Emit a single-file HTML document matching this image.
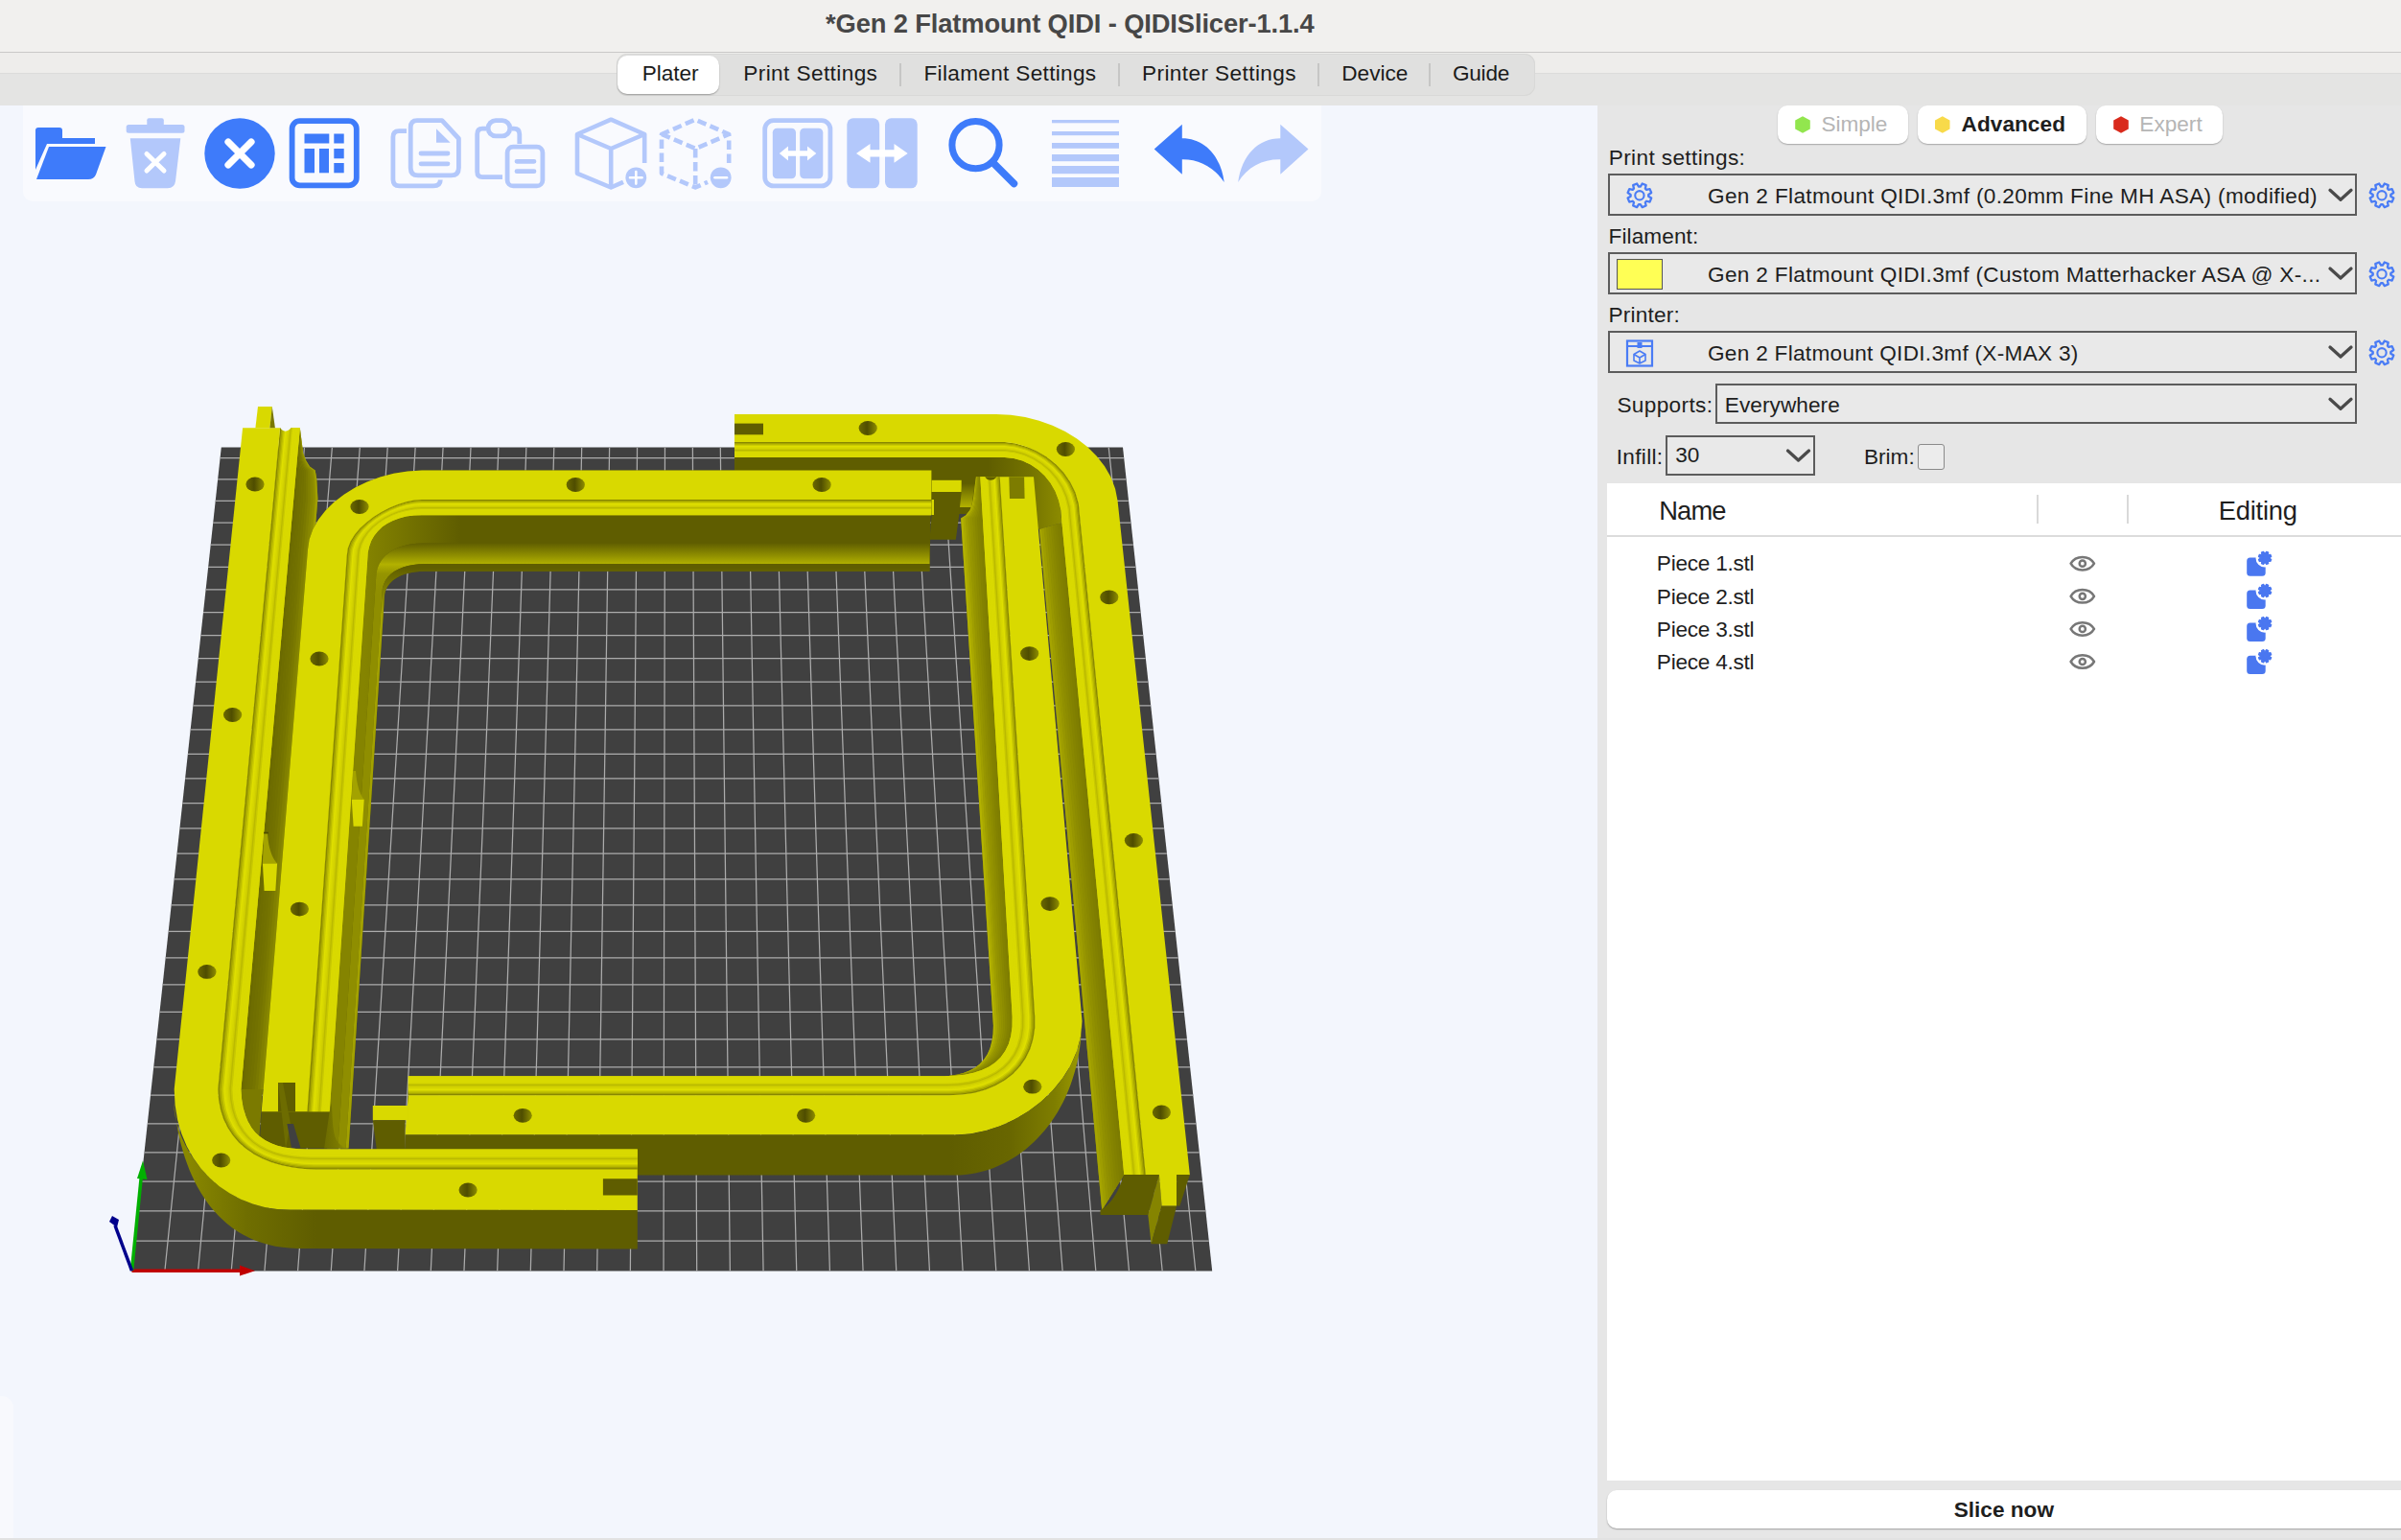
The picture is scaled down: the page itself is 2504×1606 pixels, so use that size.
<!DOCTYPE html>
<html><head><meta charset="utf-8"><style>*{margin:0;padding:0}
html,body{width:2504px;height:1606px;overflow:hidden;background:#e6e6e6}
.t{position:absolute;white-space:pre;line-height:1;font-family:"Liberation Sans", sans-serif}
.b{position:absolute}
svg{position:absolute;left:0;top:0}</style></head><body>
<div class="b" style="left:0px;top:0px;width:2504px;height:54px;background:#f1f0ee"></div>
<div class="b" style="left:0px;top:54px;width:2504px;height:1.6px;background:#c9c8c7"></div>
<div class="b" style="left:0px;top:55px;width:2504px;height:21px;background:#eeedeb"></div>
<div class="b" style="left:0px;top:76px;width:2504px;height:34px;background:#e4e4e3"></div>
<div class="b" style="left:0px;top:75.5px;width:2504px;height:1.5px;background:#dcdcdb"></div>
<div class="t" style="left:861.0px;top:10.8px;font-size:27.3px;font-weight:700;color:#474747;letter-spacing:-0.115px;">*Gen 2 Flatmount QIDI - QIDISlicer-1.1.4</div>
<div class="b" style="left:643px;top:56px;width:958px;height:43.5px;background:#e0e0df;border-radius:11px;box-shadow:inset 0 0 0 1px #d8d8d7"></div>
<div class="b" style="left:644px;top:58px;width:106px;height:40.3px;background:#fff;border-radius:10px;box-shadow:0 1px 1.5px rgba(0,0,0,0.3)"></div>
<div class="b" style="left:938px;top:66px;width:2px;height:24px;background:#c6c6c5"></div>
<div class="b" style="left:1166px;top:66px;width:2px;height:24px;background:#c6c6c5"></div>
<div class="b" style="left:1374px;top:66px;width:2px;height:24px;background:#c6c6c5"></div>
<div class="b" style="left:1490px;top:66px;width:2px;height:24px;background:#c6c6c5"></div>
<div class="t" style="left:669.8px;top:65.6px;font-size:22.6px;font-weight:400;color:#1b1b1b;letter-spacing:-0.047px;">Plater</div>
<div class="t" style="left:775.3px;top:65.6px;font-size:22.6px;font-weight:400;color:#1b1b1b;letter-spacing:0.402px;">Print Settings</div>
<div class="t" style="left:963.5px;top:65.6px;font-size:22.6px;font-weight:400;color:#1b1b1b;letter-spacing:0.32px;">Filament Settings</div>
<div class="t" style="left:1191.0px;top:65.6px;font-size:22.6px;font-weight:400;color:#1b1b1b;letter-spacing:0.408px;">Printer Settings</div>
<div class="t" style="left:1399.3px;top:65.6px;font-size:22.6px;font-weight:400;color:#1b1b1b;letter-spacing:-0.01px;">Device</div>
<div class="t" style="left:1515.0px;top:65.6px;font-size:22.6px;font-weight:400;color:#1b1b1b;letter-spacing:-0.259px;">Guide</div>
<div class="b" style="left:0px;top:110px;width:1666px;height:1494px;background:#f3f6fd"></div>
<div class="b" style="left:0px;top:1456px;width:14px;height:148px;background:#f8f9fd;border-top-right-radius:12px"></div>
<div class="b" style="left:24px;top:110px;width:1354px;height:100px;background:#f9fafe;border-bottom-left-radius:10px;border-bottom-right-radius:10px"></div>
<div class="b" style="left:1666px;top:110px;width:838px;height:1496px;background:#e6e6e6"></div>
<div class="b" style="left:0px;top:1604px;width:2504px;height:2px;background:#e2e2e2"></div>
<div class="b" style="left:1854px;top:110px;width:136px;height:40px;background:#fff;border-radius:10px;box-shadow:0 1px 1.5px rgba(0,0,0,0.28)"></div>
<div class="b" style="left:2000px;top:110px;width:176px;height:40px;background:#fff;border-radius:10px;box-shadow:0 1px 1.5px rgba(0,0,0,0.28)"></div>
<div class="b" style="left:2186px;top:110px;width:132px;height:40px;background:#fff;border-radius:10px;box-shadow:0 1px 1.5px rgba(0,0,0,0.28)"></div>
<div class="t" style="left:1899.6px;top:119.2px;font-size:22.6px;font-weight:400;color:#b5b5b5;letter-spacing:-0.06px;">Simple</div>
<div class="t" style="left:2045.5px;top:119.2px;font-size:22.6px;font-weight:700;color:#1e1e1e;letter-spacing:0.064px;">Advanced</div>
<div class="t" style="left:2231.3px;top:119.2px;font-size:22.6px;font-weight:400;color:#b5b5b5;letter-spacing:0.015px;">Expert</div>
<div class="t" style="left:1677.7px;top:153.6px;font-size:22.6px;font-weight:400;color:#1e1e1e;letter-spacing:0.381px;">Print settings:</div>
<div class="t" style="left:1677.5px;top:235.9px;font-size:22.6px;font-weight:400;color:#1e1e1e;letter-spacing:0.098px;">Filament:</div>
<div class="t" style="left:1677.5px;top:317.5px;font-size:22.6px;font-weight:400;color:#1e1e1e;letter-spacing:0.209px;">Printer:</div>
<div class="t" style="left:1686.4px;top:412.0px;font-size:22.6px;font-weight:400;color:#1e1e1e;letter-spacing:0.365px;">Supports:</div>
<div class="t" style="left:1685.7px;top:465.5px;font-size:22.6px;font-weight:400;color:#1e1e1e;letter-spacing:0.333px;">Infill:</div>
<div class="t" style="left:1944.0px;top:465.5px;font-size:22.6px;font-weight:400;color:#1e1e1e;letter-spacing:-0.004px;">Brim:</div>
<div class="b" style="left:1677px;top:181px;width:781px;height:43.7px;box-sizing:border-box;border:2px solid #5c5c5c;background:#e9e9e9"></div>
<div class="b" style="left:1677px;top:263px;width:781px;height:43.7px;box-sizing:border-box;border:2px solid #5c5c5c;background:#e9e9e9"></div>
<div class="b" style="left:1677px;top:345px;width:781px;height:43.7px;box-sizing:border-box;border:2px solid #5c5c5c;background:#e9e9e9"></div>
<div class="b" style="left:1789px;top:400px;width:669px;height:42.3px;box-sizing:border-box;border:2px solid #5c5c5c;background:#e9e9e9"></div>
<div class="b" style="left:1737px;top:453.5px;width:156px;height:42.5px;box-sizing:border-box;border:2px solid #5c5c5c;background:#e9e9e9"></div>
<div class="b" style="left:2000px;top:463px;width:28px;height:27px;box-sizing:border-box;border:1.5px solid #8a8a8a;background:#ececec;border-radius:3px"></div>
<div class="b" style="left:1686px;top:270px;width:48px;height:32px;box-sizing:border-box;border:1.5px solid #555;background:#ffff55"></div>
<div class="t" style="left:1781.0px;top:193.5px;font-size:22.6px;font-weight:400;color:#1e1e1e;letter-spacing:0.348px;">Gen 2 Flatmount QIDI.3mf (0.20mm Fine MH ASA) (modified)</div>
<div class="t" style="left:1781.0px;top:275.7px;font-size:22.6px;font-weight:400;color:#1e1e1e;letter-spacing:0.329px;">Gen 2 Flatmount QIDI.3mf (Custom Matterhacker ASA @ X-...</div>
<div class="t" style="left:1781.0px;top:357.9px;font-size:22.6px;font-weight:400;color:#1e1e1e;letter-spacing:0.292px;">Gen 2 Flatmount QIDI.3mf (X-MAX 3)</div>
<div class="t" style="left:1798.8px;top:412.0px;font-size:22.6px;font-weight:400;color:#1e1e1e;letter-spacing:0.07px;">Everywhere</div>
<div class="t" style="left:1747.2px;top:463.7px;font-size:22.6px;font-weight:400;color:#1e1e1e;letter-spacing:0.08px;">30</div>
<div class="b" style="left:1676px;top:504px;width:828px;height:1039.5px;background:#fff"></div>
<div class="b" style="left:1676px;top:557.5px;width:828px;height:2px;background:#dcdcdc"></div>
<div class="b" style="left:2124px;top:516px;width:2px;height:30px;background:#d9d9d9"></div>
<div class="b" style="left:2218px;top:516px;width:2px;height:30px;background:#d9d9d9"></div>
<div class="t" style="left:1730.3px;top:518.7px;font-size:27.3px;font-weight:400;color:#1e1e1e;letter-spacing:-0.907px;">Name</div>
<div class="t" style="left:2313.8px;top:518.7px;font-size:27.3px;font-weight:400;color:#1e1e1e;letter-spacing:-0.21px;">Editing</div>
<div class="t" style="left:1727.8px;top:577.4px;font-size:22.6px;font-weight:400;color:#1e1e1e;letter-spacing:-0.239px;">Piece 1.stl</div>
<div class="t" style="left:1727.8px;top:611.5px;font-size:22.6px;font-weight:400;color:#1e1e1e;letter-spacing:-0.239px;">Piece 2.stl</div>
<div class="t" style="left:1727.8px;top:645.6px;font-size:22.6px;font-weight:400;color:#1e1e1e;letter-spacing:-0.239px;">Piece 3.stl</div>
<div class="t" style="left:1727.8px;top:679.7px;font-size:22.6px;font-weight:400;color:#1e1e1e;letter-spacing:-0.239px;">Piece 4.stl</div>
<div class="b" style="left:1676px;top:1554px;width:840px;height:40px;background:#fff;border-radius:10px;box-shadow:0 1px 1.5px rgba(0,0,0,0.3)"></div>
<div class="t" style="left:2037.7px;top:1563.5px;font-size:22.6px;font-weight:700;color:#1e1e1e;letter-spacing:0.009px;">Slice now</div>

<svg width="2504" height="1606" viewBox="0 0 2504 1606"><defs><linearGradient id="hole" x1="0" x2="1" y1="0" y2="0"><stop offset="0" stop-color="#6b6900"/><stop offset="0.45" stop-color="#4f4d00"/><stop offset="0.55" stop-color="#5a5800"/><stop offset="1" stop-color="#8e8d00"/></linearGradient><linearGradient id="wallR" x1="0" x2="1" y1="0" y2="0"><stop offset="0" stop-color="#6c6b00"/><stop offset="0.55" stop-color="#7a7900"/><stop offset="0.9" stop-color="#959400"/><stop offset="1" stop-color="#b0af00"/></linearGradient><linearGradient id="wallL" x1="0" x2="1" y1="0" y2="0"><stop offset="0" stop-color="#b5b400"/><stop offset="0.35" stop-color="#9a9900"/><stop offset="1" stop-color="#7a7900"/></linearGradient><linearGradient id="p2wall" gradientUnits="userSpaceOnUse" x1="380" y1="0" x2="480" y2="0"><stop offset="0" stop-color="#858400"/><stop offset="1" stop-color="#5f5d00"/></linearGradient><linearGradient id="p2fil" gradientUnits="userSpaceOnUse" x1="0" y1="566" x2="0" y2="620"><stop offset="0" stop-color="#5f5d00"/><stop offset="0.2" stop-color="#868500"/><stop offset="0.42" stop-color="#b2b100"/><stop offset="0.6" stop-color="#959400"/><stop offset="1" stop-color="#8f8e00"/></linearGradient><linearGradient id="p2bot" gradientUnits="userSpaceOnUse" x1="0" y1="592" x2="0" y2="640"><stop offset="0" stop-color="#5f5d00"/><stop offset="1" stop-color="#a3a200"/></linearGradient><linearGradient id="p2endg" gradientUnits="userSpaceOnUse" x1="0" y1="504" x2="0" y2="529"><stop offset="0" stop-color="#5f5d00"/><stop offset="0.35" stop-color="#7d7c00"/><stop offset="1" stop-color="#b3b200"/></linearGradient><linearGradient id="p3wall" gradientUnits="userSpaceOnUse" x1="1030" y1="0" x2="1108" y2="0"><stop offset="0" stop-color="#5f5d00"/><stop offset="0.55" stop-color="#737200"/><stop offset="1" stop-color="#8d8c00"/></linearGradient><linearGradient id="p1front" gradientUnits="userSpaceOnUse" x1="185" y1="0" x2="330" y2="0"><stop offset="0" stop-color="#8d8c00"/><stop offset="0.5" stop-color="#6f6e00"/><stop offset="1" stop-color="#5f5d00"/></linearGradient><linearGradient id="p4front" gradientUnits="userSpaceOnUse" x1="990" y1="0" x2="1128" y2="0"><stop offset="0" stop-color="#5f5d00"/><stop offset="0.45" stop-color="#686600"/><stop offset="0.8" stop-color="#7f7e00"/><stop offset="1" stop-color="#9d9c00"/></linearGradient></defs><polygon points="230.8,466.6 1171.0,466.6 1264.2,1325.5 137.0,1325.5" fill="#404040" /><path d="M171.88,1325.50L259.61,466.66M206.55,1325.50L288.53,466.66M241.23,1325.50L317.46,466.66M275.91,1325.50L346.38,466.66M310.58,1325.50L375.30,466.66M345.26,1325.50L404.23,466.66M379.94,1325.50L433.15,466.66M414.61,1325.50L462.08,466.66M449.29,1325.50L491.00,466.66M483.97,1325.50L519.92,466.66M518.65,1325.50L548.85,466.66M553.32,1325.50L577.77,466.66M588.00,1325.50L606.70,466.66M622.68,1325.50L635.62,466.66M657.35,1325.50L664.54,466.66M692.03,1325.50L693.47,466.66M726.71,1325.50L722.39,466.66M761.38,1325.50L751.32,466.66M796.06,1325.50L780.24,466.66M830.74,1325.50L809.17,466.66M865.42,1325.50L838.09,466.66M900.09,1325.50L867.01,466.66M934.77,1325.50L895.94,466.66M969.45,1325.50L924.86,466.66M1004.12,1325.50L953.79,466.66M1038.80,1325.50L982.71,466.66M1073.48,1325.50L1011.63,466.66M1108.15,1325.50L1040.56,466.66M1142.83,1325.50L1069.48,466.66M1177.51,1325.50L1098.41,466.66M1212.19,1325.50L1127.33,466.66M1246.86,1325.50L1156.25,466.66M140.63,1294.01L1260.77,1294.01M144.01,1262.90L1257.39,1262.90M147.36,1232.17L1254.04,1232.17M150.66,1201.80L1250.74,1201.80M153.93,1171.79L1247.47,1171.79M157.16,1142.14L1244.24,1142.14M160.35,1112.84L1241.05,1112.84M163.50,1083.87L1237.90,1083.87M166.62,1055.25L1234.78,1055.25M169.70,1026.95L1231.70,1026.95M172.74,998.98L1228.66,998.98M175.75,971.33L1225.65,971.33M178.73,943.99L1222.67,943.99M181.67,916.96L1219.73,916.96M184.58,890.23L1216.82,890.23M187.46,863.80L1213.94,863.80M190.30,837.66L1211.10,837.66M193.11,811.81L1208.29,811.81M195.90,786.25L1205.50,786.25M198.65,760.96L1202.75,760.96M201.37,735.95L1200.03,735.95M204.07,711.20L1197.33,711.20M206.73,686.73L1194.67,686.73M209.37,662.51L1192.03,662.51M211.97,638.55L1189.43,638.55M214.55,614.85L1186.85,614.85M217.11,591.39L1184.29,591.39M219.63,568.18L1181.77,568.18M222.13,545.21L1179.27,545.21M224.61,522.47L1176.79,522.47M227.06,499.97L1174.34,499.97M229.48,477.71L1171.92,477.71" stroke="#acacac" stroke-width="1.25" fill="none"/><path d="M766,476 L1047.7,476 C1076.9,480 1094.4,495 1105,520.1 L1107.4,545 L1083.9,552 C1060,540 1030,536 1008,535.9 L766,535.9 Z" fill="url(#p3wall)" /><polygon points="1083.9,552.0 1149.2,1262.0 1172.3,1225.2 1107.4,545.0" fill="#838200" /><polygon points="1083.9,552.0 1149.2,1262.0 1152.0,1257.6 1086.7,551.2" fill="#a5a400" /><polygon points="1086.3,551.3 1151.5,1258.3 1154.3,1253.9 1089.1,550.5" fill="#9e9d00" /><polygon points="1088.6,550.6 1153.9,1254.6 1156.6,1250.2 1091.5,549.8" fill="#979600" /><polygon points="1091.0,549.9 1156.2,1251.0 1158.9,1246.5 1093.8,549.1" fill="#919000" /><polygon points="1093.3,549.2 1158.5,1247.3 1161.2,1242.9 1096.2,548.4" fill="#8d8c00" /><polygon points="1095.7,548.5 1160.8,1243.6 1163.5,1239.2 1098.5,547.7" fill="#898800" /><polygon points="1098.0,547.8 1163.1,1239.9 1165.8,1235.5 1100.9,547.0" fill="#858400" /><polygon points="1100.4,547.1 1165.4,1236.2 1168.1,1231.8 1103.2,546.3" fill="#828100" /><polygon points="1102.7,546.4 1167.7,1232.6 1170.4,1228.1 1105.6,545.6" fill="#7f7e00" /><polygon points="1105.1,545.7 1170.0,1228.9 1172.3,1225.2 1107.4,545.0" fill="#7c7b00" /><polygon points="766.0,461.1 1047.7,461.1 1059.0,462.6 1070.2,465.7 1081.1,470.4 1091.4,476.6 1100.8,484.1 1109.2,492.8 1116.1,502.7 1121.4,513.5 1124.8,525.2 1126.0,537.7 1194.8,1225.2 1172.3,1225.2 1107.3,543.5 1106.5,532.3 1104.2,521.9 1100.5,512.3 1095.6,503.7 1089.6,496.2 1082.6,489.7 1074.8,484.5 1066.3,480.6 1057.2,478.0 1047.7,476.9 766.0,476.9" fill="#d2d100" /><polygon points="766.0,461.1 1047.7,461.1 1059.0,462.6 1070.2,465.7 1081.1,470.4 1091.4,476.6 1100.8,484.1 1109.2,492.8 1116.1,502.7 1121.4,513.5 1124.8,525.2 1126.0,537.7 1194.8,1225.2 1192.9,1225.2 1124.5,538.2 1123.3,525.8 1120.0,514.2 1114.8,503.5 1108.1,493.7 1099.9,485.1 1090.7,477.7 1080.5,471.6 1069.8,466.9 1058.8,463.8 1047.7,462.4 766.0,462.4" fill="#888700" /><polygon points="766.0,462.1 1047.7,462.1 1058.8,463.5 1069.9,466.6 1080.7,471.3 1090.8,477.4 1100.1,484.9 1108.3,493.5 1115.2,503.3 1120.4,514.0 1123.7,525.7 1124.8,538.1 1193.3,1225.2 1191.5,1225.2 1123.3,538.5 1122.2,526.3 1118.9,514.7 1113.9,504.1 1107.2,494.4 1099.2,485.9 1090.1,478.5 1080.2,472.5 1069.6,467.9 1058.7,464.8 1047.7,463.4 766.0,463.4" fill="#a4a300" /><polygon points="766.0,463.1 1047.7,463.1 1058.7,464.5 1069.7,467.6 1080.3,472.2 1090.3,478.2 1099.4,485.6 1107.5,494.2 1114.2,503.9 1119.3,514.6 1122.5,526.1 1123.7,538.4 1191.9,1225.2 1190.1,1225.2 1122.1,538.9 1121.0,526.7 1117.9,515.3 1112.9,504.7 1106.4,495.1 1098.5,486.6 1089.6,479.3 1079.8,473.3 1069.4,468.8 1058.6,465.8 1047.7,464.4 766.0,464.4" fill="#b8b800" /><polygon points="766.0,464.1 1047.7,464.1 1058.6,465.4 1069.4,468.5 1079.9,473.1 1089.7,479.1 1098.7,486.4 1106.6,494.9 1113.2,504.5 1118.2,515.1 1121.4,526.6 1122.5,538.8 1190.5,1225.2 1188.7,1225.2 1121.0,539.3 1119.9,527.1 1116.8,515.8 1111.9,505.3 1105.5,495.8 1097.8,487.4 1089.0,480.1 1079.4,474.2 1069.1,469.7 1058.5,466.7 1047.7,465.4 766.0,465.4" fill="#cccc00" /><polygon points="766.0,465.1 1047.7,465.1 1058.5,466.4 1069.2,469.4 1079.5,473.9 1089.2,479.9 1098.0,487.1 1105.8,495.6 1112.2,505.1 1117.1,515.6 1120.2,527.0 1121.3,539.2 1189.1,1225.2 1187.3,1225.2 1119.8,539.6 1118.7,527.6 1115.7,516.3 1110.9,505.9 1104.7,496.5 1097.1,488.1 1088.5,481.0 1079.0,475.1 1068.9,470.6 1058.4,467.7 1047.7,466.4 766.0,466.4" fill="#dfdf00" /><polygon points="766.0,466.0 1047.7,466.0 1058.4,467.4 1069.0,470.3 1079.1,474.8 1088.6,480.7 1097.3,487.9 1104.9,496.2 1111.3,505.7 1116.1,516.1 1119.1,527.4 1120.2,539.5 1187.7,1225.2 1185.9,1225.2 1118.6,540.0 1117.6,528.0 1114.6,516.8 1110.0,506.5 1103.8,497.1 1096.4,488.9 1087.9,481.8 1078.6,476.0 1068.6,471.6 1058.3,468.7 1047.7,467.3 766.0,467.3" fill="#dada00" /><polygon points="766.0,467.0 1047.7,467.0 1058.3,468.3 1068.7,471.3 1078.7,475.7 1088.1,481.5 1096.6,488.6 1104.1,496.9 1110.3,506.3 1115.0,516.7 1117.9,527.9 1119.0,539.9 1186.3,1225.2 1184.5,1225.2 1117.4,540.4 1116.4,528.5 1113.6,517.4 1109.0,507.1 1103.0,497.8 1095.7,489.6 1087.4,482.6 1078.2,476.9 1068.4,472.5 1058.2,469.6 1047.7,468.3 766.0,468.3" fill="#d5d500" /><polygon points="766.0,468.0 1047.7,468.0 1058.2,469.3 1068.5,472.2 1078.3,476.6 1087.6,482.3 1095.9,489.4 1103.2,497.6 1109.3,506.9 1113.9,517.2 1116.8,528.3 1117.8,540.2 1184.9,1225.2 1183.1,1225.2 1116.3,540.7 1115.3,528.9 1112.5,517.9 1108.0,507.7 1102.1,498.5 1095.0,490.4 1086.8,483.4 1077.8,477.7 1068.2,473.4 1058.1,470.6 1047.7,469.3 766.0,469.3" fill="#cdcc00" /><polygon points="766.0,469.0 1047.7,469.0 1058.1,470.3 1068.2,473.1 1077.9,477.5 1087.0,483.2 1095.2,490.1 1102.4,498.3 1108.3,507.5 1112.8,517.7 1115.7,528.8 1116.7,540.6 1183.5,1225.2 1181.7,1225.2 1115.1,541.1 1114.1,529.4 1111.4,518.4 1107.0,508.3 1101.3,499.2 1094.3,491.1 1086.3,484.2 1077.4,478.6 1067.9,474.4 1057.9,471.5 1047.7,470.3 766.0,470.3" fill="#bbba00" /><polygon points="766.0,470.0 1047.7,470.0 1058.0,471.2 1068.0,474.1 1077.5,478.3 1086.5,484.0 1094.5,490.9 1101.6,499.0 1107.4,508.1 1111.7,518.2 1114.5,529.2 1115.5,541.0 1182.1,1225.2 1180.2,1225.2 1113.9,541.4 1113.0,529.8 1110.3,518.9 1106.1,508.9 1100.4,499.9 1093.6,491.9 1085.7,485.1 1077.0,479.5 1067.7,475.3 1057.8,472.5 1047.7,471.3 766.0,471.3" fill="#c8c800" /><polygon points="766.0,471.0 1047.7,471.0 1057.9,472.2 1067.8,475.0 1077.2,479.2 1085.9,484.8 1093.8,491.6 1100.7,499.7 1106.4,508.7 1110.7,518.8 1113.4,529.7 1114.3,541.3 1180.7,1225.2 1178.8,1225.2 1112.8,541.8 1111.9,530.2 1109.2,519.4 1105.1,509.5 1099.6,500.6 1092.9,492.6 1085.2,485.9 1076.6,480.4 1067.4,476.2 1057.7,473.5 1047.7,472.3 766.0,472.3" fill="#d9d900" /><polygon points="766.0,472.0 1047.7,472.0 1057.8,473.2 1067.5,475.9 1076.8,480.1 1085.4,485.6 1093.1,492.4 1099.9,500.3 1105.4,509.3 1109.6,519.3 1112.2,530.1 1113.1,541.7 1179.3,1225.2 1177.4,1225.2 1111.6,542.2 1110.7,530.7 1108.2,520.0 1104.1,510.1 1098.7,501.2 1092.2,493.4 1084.6,486.7 1076.3,481.3 1067.2,477.1 1057.6,474.4 1047.7,473.3 766.0,473.3" fill="#d9d900" /><polygon points="766.0,472.9 1047.7,472.9 1057.7,474.1 1067.3,476.8 1076.4,481.0 1084.8,486.4 1092.4,493.2 1099.0,501.0 1104.4,509.9 1108.5,519.8 1111.1,530.5 1112.0,542.0 1177.9,1225.2 1176.0,1225.2 1110.4,542.5 1109.6,531.1 1107.1,520.5 1103.1,510.7 1097.9,501.9 1091.5,494.2 1084.1,487.5 1075.9,482.1 1066.9,478.1 1057.5,475.4 1047.7,474.3 766.0,474.3" fill="#d9d900" /><polygon points="766.0,473.9 1047.7,473.9 1057.5,475.1 1067.0,477.8 1076.0,481.9 1084.3,487.3 1091.7,493.9 1098.2,501.7 1103.5,510.5 1107.4,520.3 1109.9,531.0 1110.8,542.4 1176.5,1225.2 1174.6,1225.2 1109.3,542.9 1108.4,531.6 1106.0,521.0 1102.2,511.3 1097.0,502.6 1090.8,494.9 1083.6,488.4 1075.5,483.0 1066.7,479.0 1057.4,476.4 1047.7,475.2 766.0,475.2" fill="#d9d900" /><polygon points="766.0,474.9 1047.7,474.9 1057.4,476.1 1066.8,478.7 1075.6,482.7 1083.7,488.1 1091.0,494.7 1097.3,502.4 1102.5,511.1 1106.4,520.8 1108.8,531.4 1109.6,542.8 1175.1,1225.2 1173.2,1225.2 1108.1,543.3 1107.3,532.0 1104.9,521.5 1101.2,511.9 1096.2,503.3 1090.1,495.7 1083.0,489.2 1075.1,483.9 1066.5,479.9 1057.3,477.3 1047.7,476.2 766.0,476.2" fill="#d9d900" /><polygon points="766.0,475.9 1047.7,475.9 1057.3,477.0 1066.5,479.6 1075.2,483.6 1083.2,488.9 1090.3,495.4 1096.5,503.1 1101.5,511.7 1105.3,521.4 1107.6,531.9 1108.5,543.1 1173.7,1225.2 1172.3,1225.2 1107.3,543.5 1106.5,532.3 1104.2,521.9 1100.5,512.3 1095.6,503.7 1089.6,496.2 1082.6,489.7 1074.8,484.5 1066.3,480.6 1057.2,478.0 1047.7,476.9 766.0,476.9" fill="#d9d900" /><polygon points="766.0,431.9 1039.0,431.9 1054.2,432.7 1069.2,435.0 1083.7,438.7 1097.7,443.8 1110.9,450.1 1123.1,457.6 1134.1,466.1 1143.8,475.7 1152.0,486.2 1158.5,497.6 1163.1,509.7 1165.6,522.5 1240.9,1225.2 1194.8,1225.2 1126.0,537.7 1124.8,525.2 1121.4,513.5 1116.1,502.7 1109.2,492.8 1100.8,484.1 1091.4,476.6 1081.1,470.4 1070.2,465.7 1059.0,462.6 1047.7,461.1 766.0,461.1" fill="#d9d900" /><polygon points="766.0,441.6 796.0,441.6 796.0,453.3 766.0,453.3" fill="#5f5d00" /><path d="M1166.2,1225 L1172.2,1225 C1166,1245 1158,1256 1147.6,1262 L1147.6,1267 L1197.3,1267 L1208.9,1225 Z" fill="#5f5d00" /><polygon points="1208.9,1225.0 1211.6,1257.5 1200.6,1297.3 1197.3,1267.0" fill="#858400" /><polygon points="1211.6,1257.5 1227.1,1257.5 1217.2,1297.3 1200.6,1297.3" fill="#5f5d00" /><polygon points="1208.9,1225.0 1227.1,1225.0 1227.1,1257.5 1211.6,1257.5" fill="#d9d900" /><polygon points="1227.1,1225.0 1240.9,1225.0 1230.4,1257.5 1227.1,1257.5" fill="#5f5d00" /><ellipse cx="905.2" cy="446.5" rx="9.6" ry="7.4" fill="url(#hole)"/><ellipse cx="1111.4" cy="468.5" rx="9.6" ry="7.4" fill="url(#hole)"/><ellipse cx="1156.8" cy="622.8" rx="9.6" ry="7.4" fill="url(#hole)"/><ellipse cx="1182.4" cy="876.4" rx="9.6" ry="7.4" fill="url(#hole)"/><ellipse cx="1211.4" cy="1160.0" rx="9.6" ry="7.4" fill="url(#hole)"/><polygon points="312.8,446.2 310.4,472.7 309.8,480.0 309.2,486.5 308.9,490.4 308.1,498.7 306.2,520.0 251.4,1136.0 280.6,1136.0 331.4,520.0 330.2,498.7 328.7,490.4 323.0,486.5 319.0,480.0 316.2,472.7 312.8,446.2" fill="#8f8e00" /><polygon points="312.8,446.2 310.4,472.7 309.8,480.0 309.2,486.5 308.9,490.4 308.1,498.7 306.2,520.0 251.4,1136.0 254.9,1136.0 309.3,520.0 310.8,498.7 311.2,490.4 310.9,486.5 310.9,480.0 311.1,472.7 312.8,446.2" fill="#6b6a00" /><polygon points="312.8,446.2 311.0,472.7 310.7,480.0 310.6,486.5 310.8,490.4 310.3,498.7 308.8,520.0 254.3,1136.0 257.8,1136.0 311.8,520.0 313.0,498.7 313.2,490.4 312.2,486.5 311.8,480.0 311.7,472.7 312.8,446.2" fill="#6e6d00" /><polygon points="312.8,446.2 311.6,472.7 311.6,480.0 312.0,486.5 312.8,490.4 312.5,498.7 311.3,520.0 257.2,1136.0 260.8,1136.0 314.3,520.0 315.2,498.7 315.2,490.4 313.6,486.5 312.7,480.0 312.3,472.7 312.8,446.2" fill="#706f00" /><polygon points="312.8,446.2 312.2,472.7 312.6,480.0 313.3,486.5 314.8,490.4 314.7,498.7 313.8,520.0 260.2,1136.0 263.7,1136.0 316.8,520.0 317.4,498.7 317.2,490.4 315.0,486.5 313.7,480.0 312.9,472.7 312.8,446.2" fill="#727100" /><polygon points="312.8,446.2 312.7,472.7 313.5,480.0 314.7,486.5 316.8,490.4 317.0,498.7 316.3,520.0 263.1,1136.0 266.6,1136.0 319.3,520.0 319.6,498.7 319.2,490.4 316.4,486.5 314.6,480.0 313.4,472.7 312.8,446.2" fill="#757400" /><polygon points="312.8,446.2 313.3,472.7 314.4,480.0 316.1,486.5 318.8,490.4 319.2,498.7 318.8,520.0 266.0,1136.0 269.5,1136.0 321.9,520.0 321.8,498.7 321.2,490.4 317.8,486.5 315.5,480.0 314.0,472.7 312.8,446.2" fill="#7a7900" /><polygon points="312.8,446.2 313.9,472.7 315.3,480.0 317.5,486.5 320.8,490.4 321.4,498.7 321.3,520.0 268.9,1136.0 272.4,1136.0 324.4,520.0 324.0,498.7 323.1,490.4 319.1,486.5 316.4,480.0 314.6,472.7 312.8,446.2" fill="#818000" /><polygon points="312.8,446.2 314.5,472.7 316.2,480.0 318.9,486.5 322.7,490.4 323.6,498.7 323.9,520.0 271.8,1136.0 275.3,1136.0 326.9,520.0 326.2,498.7 325.1,490.4 320.5,486.5 317.3,480.0 315.2,472.7 312.8,446.2" fill="#888700" /><polygon points="312.8,446.2 315.0,472.7 317.2,480.0 320.2,486.5 324.7,490.4 325.8,498.7 326.4,520.0 274.8,1136.0 278.3,1136.0 329.4,520.0 328.4,498.7 327.1,490.4 321.9,486.5 318.3,480.0 315.7,472.7 312.8,446.2" fill="#8f8e00" /><polygon points="312.8,446.2 315.6,472.7 318.1,480.0 321.6,486.5 326.7,490.4 328.0,498.7 328.9,520.0 277.7,1136.0 280.6,1136.0 331.4,520.0 330.2,498.7 328.7,490.4 323.0,486.5 319.0,480.0 316.2,472.7 312.8,446.2" fill="#a09f00" /><polygon points="292.1,446.2 227.3,1136.0 251.4,1136.0 312.8,446.2" fill="#d2d100" /><polygon points="292.1,446.2 227.3,1136.0 229.3,1136.0 293.8,446.2" fill="#888700" /><polygon points="293.4,446.2 228.8,1136.0 230.8,1136.0 295.1,446.2" fill="#a4a300" /><polygon points="294.7,446.2 230.3,1136.0 232.3,1136.0 296.4,446.2" fill="#b8b800" /><polygon points="296.0,446.2 231.8,1136.0 233.8,1136.0 297.7,446.2" fill="#cccc00" /><polygon points="297.3,446.2 233.3,1136.0 235.3,1136.0 299.0,446.2" fill="#dfdf00" /><polygon points="298.6,446.2 234.8,1136.0 236.8,1136.0 300.3,446.2" fill="#dada00" /><polygon points="299.9,446.2 236.3,1136.0 238.3,1136.0 301.6,446.2" fill="#d5d500" /><polygon points="301.2,446.2 237.8,1136.0 239.8,1136.0 302.9,446.2" fill="#cdcc00" /><polygon points="302.5,446.2 239.3,1136.0 241.3,1136.0 304.2,446.2" fill="#bbba00" /><polygon points="303.7,446.2 240.8,1136.0 242.8,1136.0 305.5,446.2" fill="#c8c800" /><polygon points="305.0,446.2 242.4,1136.0 244.3,1136.0 306.7,446.2" fill="#d9d900" /><polygon points="306.3,446.2 243.9,1136.0 245.9,1136.0 308.0,446.2" fill="#d9d900" /><polygon points="307.6,446.2 245.4,1136.0 247.4,1136.0 309.3,446.2" fill="#d9d900" /><polygon points="308.9,446.2 246.9,1136.0 248.9,1136.0 310.6,446.2" fill="#d9d900" /><polygon points="310.2,446.2 248.4,1136.0 250.4,1136.0 311.9,446.2" fill="#d9d900" /><polygon points="311.5,446.2 249.9,1136.0 251.4,1136.0 312.8,446.2" fill="#d9d900" /><path d="M292.1,445.5 C294,451 301,451 303.8,445.5 Z" fill="#f3f6fd" /><polygon points="253.1,446.2 292.1,446.2 227.3,1136.0 181.7,1136.0" fill="#d9d900" /><polygon points="269.0,424.1 283.8,424.1 281.4,446.2 266.4,446.2" fill="#d9d900" /><polygon points="283.8,424.1 286.9,446.2 281.4,446.2" fill="#7a7800" /><path d="M275.1,869.4 L279,869.4 C280,885 284,895 289.1,900.4 L273.9,900.4 Z" fill="#a3a200" /><polygon points="273.9,900.4 289.1,900.4 287.3,929.0 275.6,929.0" fill="#d9d900" /><polyline points="275.1,868.5 280.0,868.5" fill="none" stroke="#4f4d00" stroke-width="1.5" /><polygon points="971.4,490.6 440.0,490.6 425.1,491.4 410.5,493.7 396.4,497.4 382.9,502.4 370.3,508.6 358.7,515.7 348.3,523.8 339.4,532.6 332.0,542.1 326.3,552.1 322.6,562.6 321.0,573.3 272.7,1159.5 363.6,1197.5 400.8,623.9 401.2,619.4 402.3,615.2 404.2,611.5 406.7,608.2 409.7,605.3 413.4,602.7 417.5,600.6 422.0,598.8 427.0,597.4 432.2,596.5 437.8,595.9 443.6,595.7 969.5,595.7" fill="#5f5d00" /><polygon points="969.5,537.2 440.0,537.2 431.5,537.6 423.6,538.6 416.4,540.4 409.7,542.9 403.8,545.9 398.5,549.6 394.0,553.9 390.2,558.7 387.2,564.0 385.1,569.9 383.7,576.2 383.3,583.0 341.1,1197.5 352.3,1197.5 392.1,603.5 392.5,597.8 393.7,592.6 395.7,587.8 398.4,583.4 401.9,579.6 405.9,576.2 410.6,573.2 415.9,570.8 421.7,568.9 427.9,567.6 434.7,566.7 441.8,566.5 969.5,566.5" fill="url(#p2wall)" /><polygon points="969.5,566.5 441.8,566.5 434.7,566.7 427.9,567.6 421.7,568.9 415.9,570.8 410.6,573.2 405.9,576.2 401.9,579.6 398.4,583.4 395.7,587.8 393.7,592.6 392.5,597.8 392.1,603.5 352.3,1197.5 360.6,1197.5 398.5,618.6 398.9,613.8 400.1,609.4 402.0,605.3 404.5,601.8 407.7,598.6 411.4,595.8 415.7,593.5 420.4,591.5 425.6,590.0 431.1,589.0 437.0,588.3 443.1,588.1 969.5,588.1" fill="url(#p2fil)" /><polygon points="969.5,588.1 443.1,588.1 437.0,588.3 431.1,589.0 425.6,590.0 420.4,591.5 415.7,593.5 411.4,595.8 407.7,598.6 404.5,601.8 402.0,605.3 400.1,609.4 398.9,613.8 398.5,618.6 360.6,1197.5 363.6,1197.5 400.8,623.9 401.2,619.4 402.3,615.2 404.2,611.5 406.7,608.2 409.7,605.3 413.4,602.7 417.5,600.6 422.0,598.8 427.0,597.4 432.2,596.5 437.8,595.9 443.6,595.7 969.5,595.7" fill="url(#p2bot)" /><polygon points="971.4,521.0 440.0,521.0 432.2,521.6 423.8,523.3 415.1,526.0 406.4,529.6 397.8,534.0 389.7,539.1 382.1,544.9 375.4,551.1 369.8,557.7 365.5,564.7 362.8,571.8 361.8,579.1 320.4,1159.5 343.7,1159.5 383.3,583.0 383.7,576.2 385.1,569.9 387.2,564.0 390.2,558.7 394.0,553.9 398.5,549.6 403.8,545.9 409.7,542.9 416.4,540.4 423.6,538.6 431.5,537.6 440.0,537.2 971.4,537.2" fill="#d2d100" /><polygon points="971.4,521.0 440.0,521.0 432.2,521.6 423.8,523.3 415.1,526.0 406.4,529.6 397.8,534.0 389.7,539.1 382.1,544.9 375.4,551.1 369.8,557.7 365.5,564.7 362.8,571.8 361.8,579.1 320.4,1159.5 322.4,1159.5 363.6,579.4 364.5,572.2 367.1,565.1 371.2,558.3 376.6,551.7 383.1,545.6 390.4,540.0 398.3,535.0 406.7,530.7 415.2,527.2 423.8,524.6 432.1,522.9 440.0,522.3 971.4,522.3" fill="#888700" /><polygon points="971.4,522.0 440.0,522.0 432.1,522.6 423.8,524.2 415.2,526.9 406.6,530.4 398.2,534.8 390.2,539.8 382.8,545.4 376.3,551.6 370.9,558.1 366.7,565.0 364.1,572.1 363.1,579.3 321.9,1159.5 323.8,1159.5 364.9,579.7 365.8,572.5 368.3,565.4 372.3,558.7 377.6,552.2 383.8,546.2 390.9,540.7 398.7,535.7 406.9,531.5 415.3,528.1 423.8,525.5 432.1,523.9 440.0,523.3 971.4,523.3" fill="#a4a300" /><polygon points="971.4,523.0 440.0,523.0 432.1,523.6 423.8,525.2 415.3,527.8 406.8,531.3 398.6,535.5 390.8,540.4 383.6,546.0 377.3,552.1 372.0,558.5 368.0,565.3 365.4,572.4 364.5,579.6 323.3,1159.5 325.3,1159.5 366.3,579.9 367.1,572.8 369.6,565.8 373.4,559.0 378.5,552.7 384.6,546.7 391.5,541.3 399.1,536.5 407.1,532.3 415.4,529.0 423.8,526.5 432.0,524.9 440.0,524.4 971.4,524.4" fill="#b8b800" /><polygon points="971.4,524.0 440.0,524.0 432.0,524.6 423.8,526.2 415.4,528.7 407.0,532.1 398.9,536.2 391.3,541.1 384.3,546.6 378.2,552.5 373.1,558.9 369.2,565.7 366.7,572.7 365.8,579.8 324.8,1159.5 326.7,1159.5 367.6,580.2 368.4,573.0 370.8,566.1 374.5,559.4 379.4,553.1 385.3,547.3 392.0,542.0 399.4,537.2 407.3,533.2 415.5,529.9 423.8,527.4 432.0,525.9 440.0,525.4 971.4,525.4" fill="#cccc00" /><polygon points="971.4,525.0 440.0,525.0 432.0,525.6 423.8,527.1 415.4,529.6 407.2,532.9 399.3,537.0 391.9,541.8 385.1,547.1 379.1,553.0 374.2,559.3 370.4,566.0 368.0,572.9 367.2,580.1 326.3,1159.5 328.2,1159.5 368.9,580.4 369.7,573.3 372.0,566.4 375.6,559.8 380.3,553.6 386.1,547.9 392.6,542.6 399.8,538.0 407.5,534.0 415.5,530.8 423.7,528.4 432.0,526.9 440.0,526.4 971.4,526.4" fill="#dfdf00" /><polygon points="971.4,526.1 440.0,526.1 432.0,526.6 423.7,528.1 415.5,530.5 407.4,533.7 399.7,537.7 392.4,542.4 385.8,547.7 380.0,553.5 375.2,559.7 371.6,566.3 369.3,573.2 368.5,580.3 327.7,1159.5 329.6,1159.5 370.3,580.6 371.1,573.6 373.2,566.7 376.7,560.2 381.3,554.1 386.8,548.4 393.2,543.3 400.2,538.7 407.7,534.8 415.6,531.7 423.7,529.4 431.9,527.9 440.0,527.4 971.4,527.4" fill="#dada00" /><polygon points="971.4,527.1 440.0,527.1 431.9,527.6 423.7,529.0 415.6,531.4 407.6,534.6 400.1,538.5 393.0,543.1 386.6,548.2 381.0,553.9 376.3,560.1 372.8,566.6 370.6,573.5 369.9,580.6 329.2,1159.5 331.1,1159.5 371.6,580.9 372.4,573.8 374.5,567.1 377.8,560.6 382.2,554.6 387.5,549.0 393.7,543.9 400.6,539.5 407.9,535.7 415.7,532.6 423.7,530.3 431.9,528.9 440.0,528.4 971.4,528.4" fill="#d5d500" /><polygon points="971.4,528.1 440.0,528.1 431.9,528.6 423.7,530.0 415.7,532.3 407.9,535.4 400.4,539.2 393.5,543.7 387.3,548.8 381.9,554.4 377.4,560.5 374.1,567.0 371.9,573.8 371.2,580.8 330.6,1159.5 332.6,1159.5 373.0,581.1 373.7,574.1 375.7,567.4 378.9,561.0 383.1,555.0 388.3,549.5 394.3,544.6 400.9,540.2 408.1,536.5 415.8,533.5 423.7,531.3 431.8,529.9 440.0,529.4 971.4,529.4" fill="#cdcc00" /><polygon points="971.4,529.1 440.0,529.1 431.8,529.6 423.7,531.0 415.8,533.2 408.1,536.2 400.8,540.0 394.1,544.4 388.0,549.4 382.8,554.9 378.5,560.9 375.3,567.3 373.3,574.0 372.6,581.0 332.1,1159.5 334.0,1159.5 374.3,581.4 375.0,574.4 376.9,567.7 380.0,561.4 384.0,555.5 389.0,550.1 394.8,545.2 401.3,540.9 408.3,537.3 415.9,534.4 423.7,532.2 431.8,530.9 440.0,530.4 971.4,530.4" fill="#bbba00" /><polygon points="971.4,530.1 440.0,530.1 431.8,530.6 423.7,531.9 415.8,534.1 408.3,537.1 401.2,540.7 394.6,545.0 388.8,549.9 383.7,555.4 379.6,561.3 376.5,567.6 374.6,574.3 373.9,581.3 333.5,1159.5 335.5,1159.5 375.7,581.6 376.3,574.7 378.1,568.0 381.0,561.8 385.0,556.0 389.8,550.7 395.4,545.9 401.7,541.7 408.6,538.1 415.9,535.3 423.7,533.2 431.8,531.9 440.0,531.4 971.4,531.4" fill="#c8c800" /><polygon points="971.4,531.1 440.0,531.1 431.8,531.6 423.7,532.9 415.9,535.0 408.5,537.9 401.5,541.5 395.2,545.7 389.5,550.5 384.7,555.8 380.7,561.7 377.7,567.9 375.9,574.6 375.2,581.5 335.0,1159.5 336.9,1159.5 377.0,581.9 377.6,574.9 379.3,568.4 382.1,562.2 385.9,556.5 390.5,551.2 395.9,546.5 402.0,542.4 408.8,539.0 416.0,536.2 423.7,534.2 431.7,532.9 440.0,532.5 971.4,532.5" fill="#d9d900" /><polygon points="971.4,532.1 440.0,532.1 431.7,532.6 423.7,533.8 416.0,535.9 408.7,538.7 401.9,542.2 395.8,546.3 390.3,551.1 385.6,556.3 381.8,562.1 379.0,568.3 377.2,574.9 376.6,581.8 336.5,1159.5 338.4,1159.5 378.4,582.1 378.9,575.2 380.6,568.7 383.2,562.6 386.8,556.9 391.3,551.8 396.5,547.2 402.4,543.2 409.0,539.8 416.1,537.1 423.7,535.1 431.7,533.9 440.0,533.5 971.4,533.5" fill="#d9d900" /><polygon points="971.4,533.2 440.0,533.2 431.7,533.6 423.7,534.8 416.1,536.8 408.9,539.5 402.3,542.9 396.3,547.0 391.0,551.6 386.5,556.8 382.9,562.5 380.2,568.6 378.5,575.1 377.9,582.0 337.9,1159.5 339.8,1159.5 379.7,582.3 380.2,575.5 381.8,569.0 384.3,563.0 387.7,557.4 392.0,552.4 397.0,547.8 402.8,543.9 409.2,540.6 416.2,538.0 423.7,536.1 431.6,534.9 440.0,534.5 971.4,534.5" fill="#d9d900" /><polygon points="971.4,534.2 440.0,534.2 431.6,534.6 423.7,535.8 416.1,537.7 409.1,540.4 402.7,543.7 396.9,547.6 391.8,552.2 387.4,557.3 384.0,562.9 381.4,568.9 379.8,575.4 379.3,582.3 339.4,1159.5 341.3,1159.5 381.0,582.6 381.5,575.8 383.0,569.3 385.4,563.4 388.7,557.9 392.7,552.9 397.6,548.5 403.2,544.7 409.4,541.5 416.2,538.9 423.7,537.0 431.6,535.9 440.0,535.5 971.4,535.5" fill="#d9d900" /><polygon points="971.4,535.2 440.0,535.2 431.6,535.6 423.7,536.7 416.2,538.6 409.3,541.2 403.0,544.4 397.4,548.3 392.5,552.7 388.4,557.7 385.1,563.2 382.6,569.2 381.1,575.7 380.6,582.5 340.8,1159.5 342.7,1159.5 382.4,582.8 382.9,576.0 384.2,569.7 386.5,563.8 389.6,558.4 393.5,553.5 398.1,549.2 403.5,545.4 409.6,542.3 416.3,539.8 423.7,538.0 431.6,536.9 440.0,536.5 971.4,536.5" fill="#d9d900" /><polygon points="971.4,536.2 440.0,536.2 431.6,536.6 423.7,537.7 416.3,539.5 409.5,542.0 403.4,545.2 398.0,548.9 393.3,553.3 389.3,558.2 386.1,563.6 383.8,569.6 382.4,575.9 382.0,582.8 342.3,1159.5 343.7,1159.5 383.3,583.0 383.7,576.2 385.1,569.9 387.2,564.0 390.2,558.7 394.0,553.9 398.5,549.6 403.8,545.9 409.7,542.9 416.4,540.4 423.6,538.6 431.5,537.6 440.0,537.2 971.4,537.2" fill="#d9d900" /><polygon points="971.4,490.6 440.0,490.6 425.1,491.4 410.5,493.7 396.4,497.4 382.9,502.4 370.3,508.6 358.7,515.7 348.3,523.8 339.4,532.6 332.0,542.1 326.3,552.1 322.6,562.6 321.0,573.3 272.7,1159.5 320.4,1159.5 361.8,579.1 362.8,571.8 365.5,564.7 369.8,557.7 375.4,551.1 382.1,544.9 389.7,539.1 397.8,534.0 406.4,529.6 415.1,526.0 423.8,523.3 432.2,521.6 440.0,521.0 971.4,521.0" fill="#d9d900" /><polygon points="971.7,500.8 1002.7,500.8 1002.7,513.1 971.7,513.1" fill="#d9d900" /><path d="M971.7,513.1 L1002.7,513.1 L1000.4,535.9 L996.8,562.8 L969.5,562.8 L971.7,537 Z" fill="#5f5d00" /><path d="M1002.7,513.1 L1003.3,504.3 L1016.6,504.3 L1013.2,528.9 L1001,528.9 Z" fill="url(#p2endg)" /><path d="M1001,528.9 L1013.2,528.9 L1008,535.9 L1000.4,535.9 Z" fill="#5f5d00" /><polygon points="971.7,521.0 974.0,521.0 974.0,537.0 971.7,537.0" fill="#d9d900" /><path d="M272.7,1159.5 L343.7,1159.5 L341.1,1197.5 L270.5,1197.5 Z" fill="#5f5d00" /><path d="M343.7,1159.5 L338.1,1197.5 L363.6,1197.5 C346.1,1193.5 347.7,1179.5 345.7,1149.5 Z" fill="url(#wallR)" /><polygon points="290.0,1129.0 308.0,1129.0 308.0,1159.5 290.0,1159.5" fill="#5f5d00" /><polygon points="290.0,1129.0 295.0,1129.0 303.0,1172.0 298.0,1197.5" fill="#6d6c00" /><polygon points="299.4,1172.0 306.0,1172.0 313.4,1197.0 304.0,1197.0" fill="#404040" /><path d="M368,804 L371,804 C372,818 375,828 379.7,833.8 L366.8,833.8 Z" fill="#a3a200" /><polygon points="366.8,833.8 379.7,833.8 377.9,861.8 368.6,861.8" fill="#d9d900" /><ellipse cx="600.3" cy="505.5" rx="9.6" ry="7.4" fill="url(#hole)"/><ellipse cx="857.1" cy="505.5" rx="9.6" ry="7.4" fill="url(#hole)"/><ellipse cx="375.0" cy="528.5" rx="9.6" ry="7.4" fill="url(#hole)"/><ellipse cx="333.0" cy="687.0" rx="9.6" ry="7.4" fill="url(#hole)"/><ellipse cx="312.4" cy="948.1" rx="9.6" ry="7.4" fill="url(#hole)"/><polygon points="1017.9,497.3 1016.5,508.0 1015.3,518.0 1013.8,526.0 1011.5,532.0 1007.0,537.5 1002.1,540.6 1035.3,1060.0 1035.9,1069.6 1035.6,1078.3 1034.4,1086.1 1032.5,1093.2 1029.7,1099.4 1026.2,1104.8 1021.9,1109.5 1016.9,1113.4 1011.1,1116.6 1004.7,1119.0 997.7,1120.8 990.0,1121.8 990.0,1122.2 999.8,1121.8 1009.0,1120.7 1017.6,1118.8 1025.5,1116.1 1032.7,1112.5 1039.1,1108.0 1044.6,1102.5 1049.2,1096.1 1052.8,1088.7 1055.3,1080.2 1056.6,1070.7 1056.7,1060.0 1026.1,540.6 1025.9,537.5 1025.6,532.0 1025.2,526.0 1024.7,518.0 1024.0,508.0 1023.3,497.3" fill="#858400" /><polygon points="1017.9,497.3 1016.5,508.0 1015.3,518.0 1013.8,526.0 1011.5,532.0 1007.0,537.5 1002.1,540.6 1035.3,1060.0 1035.9,1069.6 1035.6,1078.3 1034.4,1086.1 1032.5,1093.2 1029.7,1099.4 1026.2,1104.8 1021.9,1109.5 1016.9,1113.4 1011.1,1116.6 1004.7,1119.0 997.7,1120.8 990.0,1121.8 990.0,1121.8 997.9,1120.9 1005.3,1119.2 1011.9,1116.9 1017.9,1113.7 1023.2,1109.9 1027.7,1105.2 1031.5,1099.8 1034.5,1093.5 1036.6,1086.4 1038.0,1078.5 1038.4,1069.7 1037.9,1060.0 1005.0,540.6 1009.3,537.5 1013.2,532.0 1015.2,526.0 1016.4,518.0 1017.4,508.0 1018.6,497.3" fill="#b3b200" /><polygon points="1018.4,497.3 1017.3,508.0 1016.2,518.0 1014.9,526.0 1012.9,532.0 1008.9,537.5 1004.5,540.6 1037.5,1060.0 1038.0,1069.7 1037.6,1078.5 1036.3,1086.4 1034.1,1093.5 1031.2,1099.7 1027.5,1105.2 1023.0,1109.8 1017.7,1113.7 1011.8,1116.8 1005.2,1119.2 997.9,1120.9 990.0,1121.8 990.0,1121.9 998.1,1121.0 1005.7,1119.4 1012.6,1117.1 1018.8,1114.0 1024.3,1110.2 1029.0,1105.5 1033.0,1100.1 1036.2,1093.8 1038.5,1086.7 1039.9,1078.7 1040.5,1069.8 1040.0,1060.0 1007.4,540.6 1011.2,537.5 1014.6,532.0 1016.3,526.0 1017.4,518.0 1018.2,508.0 1019.1,497.3" fill="#a9a800" /><polygon points="1019.0,497.3 1018.0,508.0 1017.2,518.0 1016.1,526.0 1014.3,532.0 1010.8,537.5 1006.9,540.6 1039.6,1060.0 1040.0,1069.8 1039.5,1078.7 1038.1,1086.7 1035.8,1093.8 1032.7,1100.0 1028.8,1105.5 1024.0,1110.1 1018.6,1114.0 1012.4,1117.0 1005.6,1119.4 998.1,1121.0 990.0,1121.9 990.0,1121.9 998.4,1121.1 1006.1,1119.6 1013.2,1117.3 1019.6,1114.3 1025.4,1110.5 1030.3,1105.8 1034.5,1100.4 1037.8,1094.1 1040.3,1087.0 1041.9,1078.9 1042.5,1069.9 1042.2,1060.0 1009.8,540.6 1013.1,537.5 1016.0,532.0 1017.4,526.0 1018.3,518.0 1018.9,508.0 1019.6,497.3" fill="#9f9e00" /><polygon points="1019.5,497.3 1018.8,508.0 1018.1,518.0 1017.2,526.0 1015.7,532.0 1012.7,537.5 1009.3,540.6 1041.8,1060.0 1042.1,1069.9 1041.5,1078.9 1039.9,1086.9 1037.5,1094.1 1034.2,1100.3 1030.1,1105.8 1025.1,1110.4 1019.5,1114.2 1013.1,1117.3 1006.0,1119.5 998.3,1121.1 990.0,1121.9 990.0,1122.0 998.6,1121.2 1006.5,1119.7 1013.9,1117.5 1020.5,1114.5 1026.4,1110.8 1031.6,1106.2 1036.0,1100.7 1039.5,1094.4 1042.1,1087.2 1043.9,1079.1 1044.6,1070.0 1044.3,1060.0 1012.2,540.6 1015.0,537.5 1017.4,532.0 1018.6,526.0 1019.2,518.0 1019.7,508.0 1020.2,497.3" fill="#979600" /><polygon points="1020.1,497.3 1019.5,508.0 1019.0,518.0 1018.4,526.0 1017.1,532.0 1014.6,537.5 1011.7,540.6 1043.9,1060.0 1044.2,1070.0 1043.5,1079.1 1041.8,1087.2 1039.2,1094.4 1035.7,1100.7 1031.3,1106.1 1026.2,1110.7 1020.3,1114.5 1013.7,1117.5 1006.4,1119.7 998.5,1121.2 990.0,1122.0 990.0,1122.0 998.8,1121.3 1006.9,1119.9 1014.5,1117.7 1021.4,1114.8 1027.5,1111.1 1032.9,1106.5 1037.5,1101.0 1041.2,1094.7 1044.0,1087.5 1045.8,1079.3 1046.7,1070.1 1046.5,1060.0 1014.6,540.6 1016.8,537.5 1018.8,532.0 1019.7,526.0 1020.2,518.0 1020.4,508.0 1020.7,497.3" fill="#929100" /><polygon points="1020.6,497.3 1020.3,508.0 1020.0,518.0 1019.5,526.0 1018.5,532.0 1016.5,537.5 1014.1,540.6 1046.0,1060.0 1046.3,1070.1 1045.4,1079.3 1043.6,1087.4 1040.8,1094.7 1037.2,1101.0 1032.6,1106.4 1027.3,1111.0 1021.2,1114.7 1014.4,1117.7 1006.9,1119.9 998.7,1121.3 990.0,1122.0 990.0,1122.0 999.0,1121.4 1007.4,1120.1 1015.1,1118.0 1022.2,1115.1 1028.6,1111.4 1034.2,1106.8 1039.0,1101.3 1042.9,1095.0 1045.8,1087.7 1047.8,1079.5 1048.7,1070.3 1048.6,1060.0 1017.0,540.6 1018.7,537.5 1020.2,532.0 1020.9,526.0 1021.1,518.0 1021.2,508.0 1021.3,497.3" fill="#8d8c00" /><polygon points="1021.2,497.3 1021.0,508.0 1020.9,518.0 1020.6,526.0 1019.9,532.0 1018.4,537.5 1016.5,540.6 1048.2,1060.0 1048.3,1070.2 1047.4,1079.4 1045.4,1087.7 1042.5,1094.9 1038.7,1101.3 1033.9,1106.7 1028.4,1111.3 1022.1,1115.0 1015.0,1117.9 1007.3,1120.0 998.9,1121.4 990.0,1122.0 990.0,1122.1 999.2,1121.5 1007.8,1120.2 1015.8,1118.2 1023.1,1115.3 1029.7,1111.6 1035.5,1107.1 1040.5,1101.7 1044.5,1095.3 1047.6,1088.0 1049.8,1079.7 1050.8,1070.4 1050.7,1060.0 1019.4,540.6 1020.6,537.5 1021.6,532.0 1022.0,526.0 1022.0,518.0 1021.9,508.0 1021.8,497.3" fill="#888700" /><polygon points="1021.7,497.3 1021.8,508.0 1021.9,518.0 1021.8,526.0 1021.4,532.0 1020.3,537.5 1018.9,540.6 1050.3,1060.0 1050.4,1070.3 1049.4,1079.6 1047.3,1087.9 1044.2,1095.2 1040.2,1101.6 1035.2,1107.0 1029.5,1111.6 1022.9,1115.3 1015.7,1118.1 1007.7,1120.2 999.1,1121.5 990.0,1122.1 990.0,1122.1 999.4,1121.6 1008.2,1120.4 1016.4,1118.4 1024.0,1115.6 1030.8,1111.9 1036.8,1107.4 1042.0,1102.0 1046.2,1095.6 1049.5,1088.2 1051.7,1079.9 1052.9,1070.5 1052.9,1060.0 1021.8,540.6 1022.5,537.5 1023.0,532.0 1023.1,526.0 1023.0,518.0 1022.7,508.0 1022.4,497.3" fill="#838200" /><polygon points="1022.2,497.3 1022.5,508.0 1022.8,518.0 1022.9,526.0 1022.8,532.0 1022.1,537.5 1021.3,540.6 1052.5,1060.0 1052.5,1070.5 1051.3,1079.8 1049.1,1088.2 1045.9,1095.5 1041.7,1101.9 1036.5,1107.4 1030.6,1111.9 1023.8,1115.5 1016.3,1118.4 1008.1,1120.4 999.3,1121.6 990.0,1122.1 990.0,1122.2 999.6,1121.7 1008.6,1120.6 1017.1,1118.6 1024.8,1115.9 1031.9,1112.2 1038.1,1107.7 1043.4,1102.3 1047.9,1095.9 1051.3,1088.5 1053.7,1080.1 1055.0,1070.6 1055.0,1060.0 1024.2,540.6 1024.4,537.5 1024.5,532.0 1024.3,526.0 1023.9,518.0 1023.4,508.0 1022.9,497.3" fill="#807f00" /><polygon points="1022.8,497.3 1023.3,508.0 1023.7,518.0 1024.1,526.0 1024.2,532.0 1024.0,537.5 1023.7,540.6 1054.6,1060.0 1054.5,1070.6 1053.3,1080.0 1050.9,1088.4 1047.5,1095.8 1043.1,1102.2 1037.8,1107.7 1031.6,1112.2 1024.7,1115.8 1016.9,1118.6 1008.5,1120.5 999.5,1121.7 990.0,1122.2 990.0,1122.2 999.8,1121.8 1009.0,1120.7 1017.6,1118.8 1025.5,1116.1 1032.7,1112.5 1039.1,1108.0 1044.6,1102.5 1049.2,1096.1 1052.8,1088.7 1055.3,1080.2 1056.6,1070.7 1056.7,1060.0 1026.1,540.6 1025.9,537.5 1025.6,532.0 1025.2,526.0 1024.7,518.0 1024.0,508.0 1023.3,497.3" fill="#7d7c00" /><polygon points="1042.7,497.3 1079.2,1060.0 1079.2,1072.1 1077.5,1083.5 1074.3,1094.0 1069.7,1103.6 1063.7,1112.2 1056.4,1119.9 1047.9,1126.5 1038.2,1132.1 1027.6,1136.5 1015.9,1139.7 1003.4,1141.6 990.0,1142.3 425.8,1142.3 425.8,1122.2 985.0,1122.2 995.9,1121.8 1006.0,1120.7 1015.3,1118.8 1023.8,1116.1 1031.4,1112.5 1038.0,1108.0 1043.7,1102.5 1048.3,1096.1 1051.9,1088.7 1054.3,1080.2 1055.6,1070.7 1055.7,1060.0 1022.3,497.3" fill="#d2d100" /><polygon points="1042.7,497.3 1079.2,1060.0 1079.2,1072.1 1077.5,1083.5 1074.3,1094.0 1069.7,1103.6 1063.7,1112.2 1056.4,1119.9 1047.9,1126.5 1038.2,1132.1 1027.6,1136.5 1015.9,1139.7 1003.4,1141.6 990.0,1142.3 425.8,1142.3 425.8,1140.6 989.6,1140.6 1002.7,1140.0 1015.1,1138.1 1026.6,1135.0 1037.1,1130.8 1046.5,1125.4 1054.9,1118.9 1062.0,1111.4 1067.9,1102.9 1072.5,1093.5 1075.6,1083.2 1077.2,1072.0 1077.3,1060.0 1041.0,497.3" fill="#888700" /><polygon points="1041.4,497.3 1077.8,1060.0 1077.7,1072.0 1076.1,1083.3 1072.9,1093.6 1068.3,1103.1 1062.4,1111.6 1055.2,1119.2 1046.8,1125.7 1037.3,1131.1 1026.8,1135.4 1015.3,1138.5 1002.9,1140.4 989.7,1141.0 425.8,1141.0 425.8,1139.4 989.3,1139.4 1002.3,1138.8 1014.5,1136.9 1025.8,1133.9 1036.2,1129.8 1045.5,1124.5 1053.7,1118.2 1060.8,1110.8 1066.6,1102.5 1071.0,1093.2 1074.1,1083.0 1075.8,1071.9 1075.8,1060.0 1039.7,497.3" fill="#a4a300" /><polygon points="1040.1,497.3 1076.3,1060.0 1076.2,1071.9 1074.6,1083.1 1071.5,1093.3 1067.0,1102.6 1061.2,1111.0 1054.1,1118.4 1045.8,1124.8 1036.4,1130.1 1026.0,1134.3 1014.7,1137.3 1002.4,1139.2 989.4,1139.8 425.8,1139.8 425.8,1138.1 989.0,1138.1 1001.8,1137.5 1013.9,1135.7 1025.0,1132.8 1035.2,1128.8 1044.4,1123.6 1052.6,1117.4 1059.5,1110.2 1065.2,1102.0 1069.6,1092.9 1072.7,1082.8 1074.3,1071.8 1074.4,1060.0 1038.5,497.3" fill="#b8b800" /><polygon points="1038.9,497.3 1074.8,1060.0 1074.8,1071.9 1073.2,1082.9 1070.1,1093.0 1065.7,1102.2 1059.9,1110.4 1052.9,1117.7 1044.8,1123.9 1035.5,1129.1 1025.3,1133.2 1014.1,1136.1 1002.0,1137.9 989.1,1138.5 425.8,1138.5 425.8,1136.9 988.6,1136.9 1001.3,1136.3 1013.2,1134.6 1024.3,1131.7 1034.3,1127.8 1043.4,1122.7 1051.4,1116.7 1058.3,1109.6 1063.9,1101.6 1068.2,1092.5 1071.2,1082.6 1072.8,1071.7 1072.9,1060.0 1037.2,497.3" fill="#cccc00" /><polygon points="1037.6,497.3 1073.4,1060.0 1073.3,1071.8 1071.7,1082.7 1068.7,1092.6 1064.3,1101.7 1058.7,1109.8 1051.8,1116.9 1043.7,1123.0 1034.6,1128.1 1024.5,1132.1 1013.4,1134.9 1001.5,1136.7 988.8,1137.3 425.8,1137.3 425.8,1135.6 988.3,1135.6 1000.9,1135.1 1012.6,1133.4 1023.5,1130.6 1033.4,1126.8 1042.4,1121.9 1050.3,1115.9 1057.0,1109.0 1062.6,1101.1 1066.8,1092.2 1069.8,1082.4 1071.3,1071.6 1071.4,1060.0 1035.9,497.3" fill="#dfdf00" /><polygon points="1036.3,497.3 1071.9,1060.0 1071.8,1071.7 1070.3,1082.4 1067.3,1092.3 1063.0,1101.2 1057.4,1109.2 1050.6,1116.2 1042.7,1122.1 1033.7,1127.1 1023.7,1131.0 1012.8,1133.8 1001.0,1135.4 988.4,1136.0 425.8,1136.0 425.8,1134.4 988.0,1134.4 1000.4,1133.8 1012.0,1132.2 1022.7,1129.5 1032.5,1125.8 1041.4,1121.0 1049.1,1115.2 1055.8,1108.4 1061.2,1100.6 1065.4,1091.9 1068.3,1082.2 1069.9,1071.6 1070.0,1060.0 1034.6,497.3" fill="#dada00" /><polygon points="1035.0,497.3 1070.4,1060.0 1070.3,1071.6 1068.8,1082.2 1065.9,1092.0 1061.6,1100.8 1056.2,1108.6 1049.5,1115.4 1041.7,1121.3 1032.8,1126.1 1023.0,1129.8 1012.2,1132.6 1000.6,1134.2 988.1,1134.8 425.8,1134.8 425.8,1133.1 987.7,1133.1 999.9,1132.6 1011.4,1131.0 1022.0,1128.4 1031.6,1124.8 1040.3,1120.1 1048.0,1114.4 1054.5,1107.8 1059.9,1100.2 1064.0,1091.6 1066.9,1082.0 1068.4,1071.5 1068.5,1060.0 1033.4,497.3" fill="#d5d500" /><polygon points="1033.8,497.3 1069.0,1060.0 1068.9,1071.5 1067.4,1082.0 1064.5,1091.7 1060.3,1100.3 1054.9,1108.0 1048.3,1114.7 1040.6,1120.4 1031.9,1125.1 1022.2,1128.7 1011.6,1131.4 1000.1,1133.0 987.8,1133.5 425.8,1133.5 425.8,1131.8 987.4,1131.8 999.5,1131.3 1010.8,1129.8 1021.2,1127.3 1030.7,1123.8 1039.3,1119.2 1046.8,1113.7 1053.3,1107.2 1058.5,1099.7 1062.6,1091.2 1065.4,1081.8 1066.9,1071.4 1067.0,1060.0 1032.1,497.3" fill="#cdcc00" /><polygon points="1032.5,497.3 1067.5,1060.0 1067.4,1071.4 1065.9,1081.8 1063.1,1091.3 1059.0,1099.8 1053.7,1107.4 1047.2,1113.9 1039.6,1119.5 1031.0,1124.1 1021.4,1127.6 1011.0,1130.2 999.6,1131.7 987.5,1132.2 425.8,1132.2 425.8,1130.6 987.1,1130.6 999.0,1130.1 1010.1,1128.6 1020.4,1126.2 1029.8,1122.8 1038.3,1118.3 1045.7,1113.0 1052.0,1106.6 1057.2,1099.2 1061.2,1090.9 1064.0,1081.6 1065.5,1071.3 1065.6,1060.0 1030.8,497.3" fill="#bbba00" /><polygon points="1031.2,497.3 1066.0,1060.0 1065.9,1071.3 1064.5,1081.6 1061.7,1091.0 1057.6,1099.4 1052.4,1106.8 1046.0,1113.2 1038.6,1118.6 1030.1,1123.1 1020.7,1126.5 1010.3,1129.0 999.2,1130.5 987.2,1131.0 425.8,1131.0 425.8,1129.3 986.8,1129.3 998.5,1128.9 1009.5,1127.4 1019.7,1125.1 1028.9,1121.8 1037.2,1117.5 1044.5,1112.2 1050.8,1106.0 1055.9,1098.8 1059.8,1090.6 1062.5,1081.4 1064.0,1071.2 1064.1,1060.0 1029.6,497.3" fill="#c8c800" /><polygon points="1030.0,497.3 1064.6,1060.0 1064.5,1071.2 1063.0,1081.4 1060.3,1090.7 1056.3,1098.9 1051.2,1106.2 1044.9,1112.4 1037.6,1117.7 1029.2,1122.1 1019.9,1125.4 1009.7,1127.8 998.7,1129.3 986.9,1129.7 425.8,1129.7 425.8,1128.1 986.5,1128.1 998.1,1127.6 1008.9,1126.3 1018.9,1124.0 1028.0,1120.8 1036.2,1116.6 1043.4,1111.5 1049.5,1105.4 1054.5,1098.3 1058.4,1090.2 1061.1,1081.2 1062.5,1071.1 1062.6,1060.0 1028.3,497.3" fill="#d9d900" /><polygon points="1028.7,497.3 1063.1,1060.0 1063.0,1071.1 1061.6,1081.2 1058.9,1090.3 1055.0,1098.4 1049.9,1105.6 1043.7,1111.7 1036.5,1116.9 1028.3,1121.1 1019.1,1124.3 1009.1,1126.6 998.2,1128.0 986.6,1128.5 425.8,1128.5 425.8,1126.8 986.1,1126.8 997.6,1126.4 1008.3,1125.1 1018.1,1122.9 1027.1,1119.8 1035.2,1115.7 1042.2,1110.7 1048.3,1104.8 1053.2,1097.8 1057.0,1089.9 1059.7,1081.0 1061.0,1071.0 1061.1,1060.0 1027.0,497.3" fill="#d9d900" /><polygon points="1027.4,497.3 1061.6,1060.0 1061.5,1071.0 1060.1,1081.0 1057.5,1090.0 1053.6,1098.0 1048.7,1105.0 1042.6,1111.0 1035.5,1116.0 1027.4,1120.1 1018.4,1123.2 1008.5,1125.5 997.8,1126.8 986.2,1127.2 425.8,1127.2 425.8,1125.6 985.8,1125.6 997.1,1125.2 1007.7,1123.9 1017.4,1121.8 1026.2,1118.8 1034.1,1114.8 1041.1,1110.0 1047.0,1104.2 1051.9,1097.4 1055.6,1089.6 1058.2,1080.8 1059.6,1070.9 1059.7,1060.0 1025.7,497.3" fill="#d9d900" /><polygon points="1026.1,497.3 1060.1,1060.0 1060.0,1070.9 1058.7,1080.8 1056.1,1089.7 1052.3,1097.5 1047.4,1104.4 1041.4,1110.2 1034.5,1115.1 1026.5,1119.1 1017.6,1122.1 1007.9,1124.3 997.3,1125.5 985.9,1126.0 425.8,1126.0 425.8,1124.3 985.5,1124.3 996.7,1123.9 1007.0,1122.7 1016.6,1120.7 1025.3,1117.8 1033.1,1114.0 1039.9,1109.2 1045.8,1103.6 1050.5,1096.9 1054.2,1089.3 1056.8,1080.6 1058.1,1070.8 1058.2,1060.0 1024.5,497.3" fill="#d9d900" /><polygon points="1024.9,497.3 1058.7,1060.0 1058.6,1070.9 1057.2,1080.6 1054.7,1089.4 1051.0,1097.1 1046.2,1103.7 1040.3,1109.5 1033.4,1114.2 1025.6,1118.1 1016.9,1121.0 1007.2,1123.1 996.8,1124.3 985.6,1124.7 425.8,1124.7 425.8,1123.1 985.2,1123.1 996.2,1122.7 1006.4,1121.5 1015.8,1119.6 1024.4,1116.8 1032.1,1113.1 1038.8,1108.5 1044.5,1102.9 1049.2,1096.4 1052.8,1088.9 1055.3,1080.4 1056.6,1070.7 1056.7,1060.0 1023.2,497.3" fill="#d9d900" /><polygon points="1023.6,497.3 1057.2,1060.0 1057.1,1070.8 1055.8,1080.4 1053.3,1089.0 1049.6,1096.6 1044.9,1103.1 1039.1,1108.7 1032.4,1113.4 1024.7,1117.1 1016.1,1119.9 1006.6,1121.9 996.4,1123.1 985.3,1123.5 425.8,1123.5 425.8,1122.2 985.0,1122.2 995.9,1121.8 1006.0,1120.7 1015.3,1118.8 1023.8,1116.1 1031.4,1112.5 1038.0,1108.0 1043.7,1102.5 1048.3,1096.1 1051.9,1088.7 1054.3,1080.2 1055.6,1070.7 1055.7,1060.0 1022.3,497.3" fill="#d9d900" /><polygon points="1078.0,497.3 1128.5,1065.0 1127.0,1081.0 1122.9,1096.4 1116.6,1111.0 1108.1,1124.6 1097.8,1137.3 1085.9,1148.7 1072.7,1158.7 1058.4,1167.3 1043.2,1174.2 1027.4,1179.3 1011.3,1182.5 995.0,1183.6 422.5,1183.6 425.8,1142.3 990.0,1142.3 1003.4,1141.6 1015.9,1139.7 1027.6,1136.5 1038.2,1132.1 1047.9,1126.5 1056.4,1119.9 1063.7,1112.2 1069.7,1103.6 1074.3,1094.0 1077.5,1083.5 1079.2,1072.1 1079.2,1060.0 1042.7,497.3" fill="#d9d900" /><path d="M422.5,1183.6 L995,1183.6 C1060,1183.6 1128,1130 1128.5,1065 L1127,1085.5 C1118,1170 1060,1225.6 995.5,1225.6 L392.7,1225.6 L392.7,1197.8 L422.5,1197.8 Z" fill="url(#p4front)" /><polygon points="388.8,1153.0 425.8,1153.0 425.8,1168.2 388.8,1168.2" fill="#d9d900" /><polygon points="388.8,1168.2 422.5,1168.2 422.5,1198.0 392.7,1198.0" fill="#5f5d00" /><polygon points="1052.3,497.3 1068.1,497.3 1068.6,520.1 1053.0,520.1" fill="#7d7c00" /><path d="M1027.2,497.3 C1030,502 1036,502 1039.5,497.3 Z" fill="#5f5d00" /><ellipse cx="1073.7" cy="681.6" rx="9.6" ry="7.4" fill="url(#hole)"/><ellipse cx="1095.1" cy="942.6" rx="9.6" ry="7.4" fill="url(#hole)"/><ellipse cx="1076.8" cy="1133.2" rx="9.6" ry="7.4" fill="url(#hole)"/><ellipse cx="545.2" cy="1163.3" rx="9.6" ry="7.4" fill="url(#hole)"/><ellipse cx="840.6" cy="1163.3" rx="9.6" ry="7.4" fill="url(#hole)"/><path d="M181,1150 C183,1200 230,1262 302.5,1261.6 L664.8,1262 L664.8,1302.6 L310.3,1302 C240,1301 200,1250 185.6,1179.7 Z" fill="url(#p1front)" /><polygon points="251.4,1136.0 252.1,1146.0 253.6,1154.9 255.8,1162.8 258.7,1169.8 262.3,1175.9 266.5,1181.2 271.3,1185.6 276.7,1189.3 282.7,1192.3 269.8,1194.0 274.1,1136.0" fill="#7b7a00" /><polygon points="227.3,1136.0 228.1,1147.2 230.1,1157.6 233.2,1167.2 237.5,1176.1 242.8,1184.1 249.1,1191.4 256.4,1197.8 264.6,1203.4 273.7,1208.2 283.5,1212.2 294.1,1215.3 305.5,1217.6 317.4,1219.0 330.0,1219.5 664.8,1219.5 664.8,1198.5 320.0,1198.5 311.6,1198.3 303.7,1197.6 296.2,1196.4 289.2,1194.7 282.7,1192.3 276.7,1189.3 271.3,1185.6 266.5,1181.2 262.3,1175.9 258.7,1169.8 255.8,1162.8 253.6,1154.9 252.1,1146.0 251.4,1136.0" fill="#d2d100" /><polygon points="227.3,1136.0 228.1,1147.2 230.1,1157.6 233.2,1167.2 237.5,1176.1 242.8,1184.1 249.1,1191.4 256.4,1197.8 264.6,1203.4 273.7,1208.2 283.5,1212.2 294.1,1215.3 305.5,1217.6 317.4,1219.0 330.0,1219.5 664.8,1219.5 664.8,1217.8 329.2,1217.8 316.9,1217.3 305.3,1215.9 294.3,1213.7 284.0,1210.7 274.4,1206.9 265.6,1202.3 257.6,1196.8 250.6,1190.5 244.4,1183.5 239.2,1175.6 235.1,1166.9 232.0,1157.4 230.1,1147.1 229.3,1136.0" fill="#888700" /><polygon points="228.8,1136.0 229.6,1147.1 231.5,1157.4 234.6,1167.0 238.8,1175.7 244.0,1183.6 250.2,1190.7 257.3,1197.1 265.4,1202.5 274.2,1207.2 283.9,1211.1 294.3,1214.1 305.3,1216.3 317.1,1217.7 329.4,1218.2 664.8,1218.2 664.8,1216.5 328.6,1216.5 316.6,1216.0 305.2,1214.7 294.4,1212.6 284.3,1209.6 275.0,1205.9 266.4,1201.4 258.6,1196.0 251.6,1189.9 245.6,1182.9 240.5,1175.2 236.5,1166.6 233.5,1157.2 231.6,1147.0 230.8,1136.0" fill="#a4a300" /><polygon points="230.3,1136.0 231.1,1147.0 233.0,1157.3 236.0,1166.7 240.1,1175.3 245.2,1183.1 251.3,1190.1 258.3,1196.3 266.1,1201.7 274.8,1206.2 284.2,1210.0 294.4,1212.9 305.2,1215.1 316.7,1216.4 328.8,1216.9 664.8,1216.9 664.8,1215.1 327.9,1215.1 316.2,1214.7 305.1,1213.4 294.6,1211.4 284.7,1208.5 275.5,1204.9 267.1,1200.5 259.5,1195.3 252.7,1189.3 246.8,1182.4 241.9,1174.8 237.9,1166.3 234.9,1157.0 233.1,1146.9 232.3,1136.0" fill="#b8b800" /><polygon points="231.8,1136.0 232.6,1147.0 234.5,1157.1 237.4,1166.4 241.5,1174.9 246.4,1182.6 252.4,1189.5 259.2,1195.5 266.9,1200.8 275.4,1205.2 284.6,1208.9 294.5,1211.8 305.1,1213.8 316.3,1215.1 328.1,1215.6 664.8,1215.6 664.8,1213.8 327.3,1213.8 315.9,1213.4 305.0,1212.2 294.7,1210.2 285.1,1207.5 276.1,1203.9 267.9,1199.6 260.4,1194.5 253.8,1188.6 248.1,1181.9 243.2,1174.4 239.3,1166.0 236.4,1156.9 234.6,1146.9 233.8,1136.0" fill="#cccc00" /><polygon points="233.3,1136.0 234.1,1146.9 235.9,1156.9 238.9,1166.1 242.8,1174.5 247.7,1182.1 253.5,1188.8 260.1,1194.8 267.6,1199.9 275.9,1204.2 284.9,1207.8 294.7,1210.6 305.0,1212.6 316.0,1213.8 327.5,1214.2 664.8,1214.2 664.8,1212.5 326.7,1212.5 315.5,1212.1 304.9,1210.9 294.8,1209.0 285.4,1206.4 276.7,1202.9 268.6,1198.7 261.4,1193.8 254.9,1188.0 249.3,1181.4 244.5,1174.0 240.7,1165.8 237.9,1156.7 236.1,1146.8 235.3,1136.0" fill="#dfdf00" /><polygon points="234.8,1136.0 235.6,1146.8 237.4,1156.8 240.3,1165.9 244.1,1174.1 248.9,1181.6 254.5,1188.2 261.1,1194.0 268.4,1199.0 276.5,1203.3 285.3,1206.7 294.8,1209.4 304.9,1211.3 315.6,1212.5 326.9,1212.9 664.8,1212.9 664.8,1211.2 326.1,1211.2 315.1,1210.8 304.8,1209.7 295.0,1207.8 285.8,1205.3 277.2,1201.9 269.4,1197.9 262.3,1193.0 256.0,1187.3 250.5,1180.9 245.9,1173.6 242.1,1165.5 239.4,1156.5 237.6,1146.7 236.8,1136.0" fill="#dada00" /><polygon points="236.3,1136.0 237.1,1146.7 238.9,1156.6 241.7,1165.6 245.4,1173.7 250.1,1181.1 255.6,1187.5 262.0,1193.2 269.1,1198.1 277.0,1202.3 285.6,1205.6 294.9,1208.2 304.8,1210.1 315.3,1211.2 326.2,1211.6 664.8,1211.6 664.8,1209.9 325.4,1209.9 314.8,1209.5 304.6,1208.4 295.1,1206.7 286.1,1204.2 277.8,1201.0 270.1,1197.0 263.2,1192.2 257.1,1186.7 251.7,1180.4 247.2,1173.2 243.5,1165.2 240.8,1156.4 239.1,1146.6 238.3,1136.0" fill="#d5d500" /><polygon points="237.8,1136.0 238.6,1146.7 240.4,1156.4 243.1,1165.3 246.8,1173.3 251.3,1180.5 256.7,1186.9 262.9,1192.5 269.9,1197.3 277.6,1201.3 286.0,1204.5 295.0,1207.0 304.7,1208.8 314.9,1209.9 325.6,1210.3 664.8,1210.3 664.8,1208.6 324.8,1208.6 314.4,1208.2 304.5,1207.2 295.2,1205.5 286.5,1203.1 278.4,1200.0 270.9,1196.1 264.2,1191.5 258.1,1186.1 252.9,1179.9 248.5,1172.8 245.0,1164.9 242.3,1156.2 240.6,1146.6 239.8,1136.0" fill="#cdcc00" /><polygon points="239.4,1136.0 240.1,1146.6 241.8,1156.2 244.5,1165.0 248.1,1173.0 252.5,1180.0 257.8,1186.3 263.9,1191.7 270.7,1196.4 278.2,1200.3 286.4,1203.4 295.2,1205.9 304.6,1207.6 314.5,1208.6 325.0,1209.0 664.8,1209.0 664.8,1207.3 324.2,1207.3 314.1,1206.9 304.4,1205.9 295.3,1204.3 286.8,1202.0 278.9,1199.0 271.7,1195.2 265.1,1190.7 259.2,1185.4 254.1,1179.3 249.8,1172.4 246.4,1164.7 243.8,1156.0 242.1,1146.5 241.3,1136.0" fill="#bbba00" /><polygon points="240.9,1136.0 241.6,1146.5 243.3,1156.1 245.9,1164.8 249.4,1172.6 253.7,1179.5 258.9,1185.6 264.8,1191.0 271.4,1195.5 278.7,1199.3 286.7,1202.3 295.3,1204.7 304.5,1206.3 314.2,1207.3 324.4,1207.7 664.8,1207.7 664.8,1206.0 323.6,1206.0 313.7,1205.6 304.3,1204.7 295.5,1203.1 287.2,1200.9 279.5,1198.0 272.4,1194.3 266.0,1190.0 260.3,1184.8 255.4,1178.8 251.2,1172.0 247.8,1164.4 245.2,1155.9 243.6,1146.4 242.8,1136.0" fill="#c8c800" /><polygon points="242.4,1136.0 243.1,1146.4 244.8,1155.9 247.3,1164.5 250.7,1172.2 255.0,1179.0 260.0,1185.0 265.7,1190.2 272.2,1194.6 279.3,1198.3 287.1,1201.2 295.4,1203.5 304.4,1205.1 313.8,1206.0 323.8,1206.4 664.8,1206.4 664.8,1204.6 322.9,1204.6 313.3,1204.3 304.2,1203.4 295.6,1201.9 287.5,1199.8 280.0,1197.0 273.2,1193.5 266.9,1189.2 261.4,1184.2 256.6,1178.3 252.5,1171.7 249.2,1164.1 246.7,1155.7 245.1,1146.3 244.4,1136.0" fill="#d9d900" /><polygon points="243.9,1136.0 244.6,1146.3 246.2,1155.7 248.7,1164.2 252.1,1171.8 256.2,1178.5 261.1,1184.4 266.6,1189.4 272.9,1193.7 279.9,1197.3 287.4,1200.1 295.6,1202.3 304.2,1203.8 313.4,1204.7 323.1,1205.1 664.8,1205.1 664.8,1203.3 322.3,1203.3 313.0,1203.0 304.1,1202.2 295.7,1200.8 287.9,1198.7 280.6,1196.0 273.9,1192.6 267.9,1188.4 262.5,1183.5 257.8,1177.8 253.8,1171.3 250.6,1163.8 248.2,1155.5 246.6,1146.2 245.9,1136.0" fill="#d9d900" /><polygon points="245.4,1136.0 246.1,1146.3 247.7,1155.6 250.2,1163.9 253.4,1171.4 257.4,1178.0 262.1,1183.7 267.6,1188.7 273.7,1192.9 280.4,1196.3 287.8,1199.1 295.7,1201.1 304.1,1202.6 313.1,1203.5 322.5,1203.8 664.8,1203.8 664.8,1202.0 321.7,1202.0 312.6,1201.7 304.0,1200.9 295.9,1199.6 288.2,1197.6 281.2,1195.0 274.7,1191.7 268.8,1187.7 263.6,1182.9 259.0,1177.3 255.1,1170.9 252.0,1163.6 249.7,1155.3 248.1,1146.2 247.4,1136.0" fill="#d9d900" /><polygon points="246.9,1136.0 247.6,1146.2 249.2,1155.4 251.6,1163.7 254.7,1171.0 258.6,1177.5 263.2,1183.1 268.5,1187.9 274.4,1192.0 281.0,1195.3 288.1,1198.0 295.8,1200.0 304.0,1201.3 312.7,1202.2 321.9,1202.4 664.8,1202.4 664.8,1200.7 321.1,1200.7 312.2,1200.5 303.9,1199.7 296.0,1198.4 288.6,1196.5 281.7,1194.0 275.4,1190.8 269.7,1186.9 264.7,1182.2 260.2,1176.8 256.5,1170.5 253.4,1163.3 251.1,1155.2 249.6,1146.1 248.9,1136.0" fill="#d9d900" /><polygon points="248.4,1136.0 249.1,1146.1 250.7,1155.2 253.0,1163.4 256.0,1170.6 259.8,1176.9 264.3,1182.4 269.4,1187.1 275.2,1191.1 281.6,1194.3 288.5,1196.9 295.9,1198.8 303.9,1200.1 312.4,1200.9 321.2,1201.1 664.8,1201.1 664.8,1199.4 320.4,1199.4 311.9,1199.2 303.8,1198.5 296.1,1197.2 288.9,1195.4 282.3,1193.0 276.2,1189.9 270.7,1186.1 265.7,1181.6 261.4,1176.3 257.8,1170.1 254.8,1163.0 252.6,1155.0 251.1,1146.0 250.4,1136.0" fill="#d9d900" /><polygon points="249.9,1136.0 250.6,1146.0 252.1,1155.1 254.4,1163.1 257.4,1170.2 261.1,1176.4 265.4,1181.8 270.4,1186.4 276.0,1190.2 282.1,1193.3 288.8,1195.8 296.1,1197.6 303.8,1198.9 312.0,1199.6 320.6,1199.8 664.8,1199.8 664.8,1198.5 320.0,1198.5 311.6,1198.3 303.7,1197.6 296.2,1196.4 289.2,1194.7 282.7,1192.3 276.7,1189.3 271.3,1185.6 266.5,1181.2 262.3,1175.9 258.7,1169.8 255.8,1162.8 253.6,1154.9 252.1,1146.0 251.4,1136.0" fill="#d9d900" /><polygon points="181.7,1136.0 182.6,1152.4 185.2,1167.9 189.3,1182.2 194.8,1195.5 201.7,1207.7 209.7,1218.7 218.8,1228.6 228.8,1237.2 239.7,1244.6 251.3,1250.7 263.5,1255.5 276.1,1258.9 289.2,1261.0 302.5,1261.6 664.8,1262.0 664.8,1219.5 330.0,1219.5 317.4,1219.0 305.5,1217.6 294.1,1215.3 283.5,1212.2 273.7,1208.2 264.6,1203.4 256.4,1197.8 249.1,1191.4 242.8,1184.1 237.5,1176.1 233.2,1167.2 230.1,1157.6 228.1,1147.2 227.3,1136.0" fill="#d9d900" /><polygon points="628.9,1229.3 664.8,1229.3 664.8,1246.5 628.9,1246.5" fill="#5f5d00" /><ellipse cx="488.1" cy="1241.0" rx="9.6" ry="7.4" fill="url(#hole)"/><ellipse cx="230.7" cy="1210.0" rx="9.6" ry="7.4" fill="url(#hole)"/><ellipse cx="215.9" cy="1013.4" rx="9.6" ry="7.4" fill="url(#hole)"/><ellipse cx="242.6" cy="745.5" rx="9.6" ry="7.4" fill="url(#hole)"/><ellipse cx="266.0" cy="505.0" rx="9.6" ry="7.4" fill="url(#hole)"/><path d="M137.5,1325.2 L255,1325.2" stroke="#c00000" stroke-width="3.5"/><path d="M250,1319.5 L266,1325.2 L250,1330.5 Z" fill="#c00000"/><path d="M137.5,1325.2 L147.5,1225" stroke="#00b000" stroke-width="3.5"/><path d="M143,1229 L149,1210.5 L153.5,1230 Z" fill="#00b000"/><path d="M137.5,1325.2 L120,1278" stroke="#00008c" stroke-width="3.5"/><path d="M114,1274 L117,1268 L124,1272 L122,1280 Z" fill="#00008c"/><path d="M37,136 Q37,133 40,133 L62,133 Q65,133 65,136 L65,144 L99,144 L99,150 L49,150 L37,177 Z" fill="#3e7bfa"/><path d="M51,153 L110.5,153 L100,182 Q98,187 92,187 L38,187 Z" fill="#3e7bfa"/><rect x="153.3" y="123.3" width="17.5" height="9" rx="2" fill="#b3c8fb"/><rect x="131.7" y="130" width="60.8" height="8.7" rx="2.5" fill="#b3c8fb"/><path d="M135.8,144.2 L188.3,144.2 L183,189 Q182,196.3 175,196.3 L148,196.3 Q141,196.3 140.5,189 Z" fill="#b3c8fb"/><path d="M153,160.5 L171,178 M171,160.5 L153,178" stroke="#fff" stroke-width="5" stroke-linecap="round"/><circle cx="250" cy="160" r="36.7" fill="#3e7bfa"/><path d="M238,148 L262,172 M262,148 L238,172" stroke="#fff" stroke-width="7.2" stroke-linecap="round"/><rect x="304.6" y="126.2" width="67.2" height="67.2" rx="8" fill="none" stroke="#3e7bfa" stroke-width="5.8"/><rect x="317.5" y="139.5" width="25.8" height="10.0" fill="#3e7bfa"/><rect x="348.3" y="139.5" width="10.4" height="10.0" fill="#3e7bfa"/><rect x="317.5" y="155" width="10.5" height="25.3" fill="#3e7bfa"/><rect x="333" y="155" width="10.0" height="25.3" fill="#3e7bfa"/><rect x="348.3" y="155" width="10.4" height="10.3" fill="#3e7bfa"/><rect x="348.3" y="170" width="10.4" height="10.3" fill="#3e7bfa"/><path d="M424,136.6 L416,136.6 Q409.9,136.6 409.9,143 L409.9,187 Q409.9,193.9 416.5,193.9 L452,193.9 Q459.3,193.9 459.3,187.5" fill="none" stroke="#b3c8fb" stroke-width="4.8"/><path d="M435,125.7 L461,125.7 L478.4,144.5 L478.4,175 Q478.4,182.9 470.5,182.9 L436,182.9 Q428.2,182.9 428.2,175 L428.2,133 Q428.2,125.7 435,125.7 Z" fill="none" stroke="#b3c8fb" stroke-width="4.8" stroke-linejoin="round"/><path d="M455,134.2 L469.7,148.8 L455,148.8 Z" fill="#b3c8fb"/><path d="M439,160 L467,160 M439,170.8 L467,170.8" stroke="#b3c8fb" stroke-width="4.8" stroke-linecap="round"/><path d="M524,184.6 L503,184.6 Q497.7,184.6 497.7,179 L497.7,140 Q497.7,134.1 503,134.1 L507,134.1 M533.7,134.1 L536,134.1 Q541.8,134.1 541.8,140 L541.8,150" fill="none" stroke="#b3c8fb" stroke-width="4.8"/><rect x="509.1" y="125.7" width="22.7" height="16.1" rx="8" fill="none" stroke="#b3c8fb" stroke-width="4.8"/><rect x="529.1" y="153.2" width="36.8" height="40.7" rx="6" fill="none" stroke="#b3c8fb" stroke-width="4.8"/><path d="M539,168.3 L557,168.3 M539,178.7 L557,178.7" stroke="#b3c8fb" stroke-width="4.8" stroke-linecap="round"/><path d="M672.2,170 L672.2,140 L637.2,124.7 L602,140 L602,180.8 L637.2,195.5 L650,189.8" fill="none" stroke="#b3c8fb" stroke-width="4.6" stroke-linejoin="round"/><path d="M602,140 L637.2,155 L672.2,140 M637.2,155 L637.2,195.5" fill="none" stroke="#b3c8fb" stroke-width="4.6" stroke-linejoin="round"/><circle cx="663.3" cy="185.3" r="10.9" fill="#b3c8fb"/><path d="M657,185.3 L669.6,185.3 M663.3,179 L663.3,191.6" stroke="#fff" stroke-width="2.6" stroke-linecap="round"/><path d="M760.2,170 L760.2,140 L725.2,124.7 L690,140 L690,180.8 L725.2,195.5 L738,189.8" fill="none" stroke="#b3c8fb" stroke-width="4.6" stroke-dasharray="9.5,4.5" stroke-linejoin="round"/><path d="M690,140 L725.2,155 L760.2,140 M725.2,155 L725.2,195.5" fill="none" stroke="#b3c8fb" stroke-width="4.6" stroke-dasharray="9.5,4.5"/><circle cx="751.7" cy="185.3" r="10.9" fill="#b3c8fb"/><path d="M745.5,185.3 L758,185.3" stroke="#fff" stroke-width="2.6" stroke-linecap="round"/><rect x="797.7" y="125.7" width="68.2" height="68.2" rx="9" fill="none" stroke="#b3c8fb" stroke-width="4.8"/><rect x="805.8" y="133.8" width="24.2" height="52.4" rx="4.5" fill="#b3c8fb"/><rect x="834.2" y="133.8" width="24.1" height="52.4" rx="4.5" fill="#b3c8fb"/><path d="M812.8,160 L822,152.5 L822,157.3 L842,157.3 L842,152.5 L851.3,160 L842,167.5 L842,162.7 L822,162.7 L822,167.5 Z" fill="#fff"/><rect x="883.3" y="123.3" width="33.9" height="73" rx="6.5" fill="#b3c8fb"/><rect x="923" y="123.3" width="33.7" height="73" rx="6.5" fill="#b3c8fb"/><path d="M893,160 L907.5,150 L907.5,156.2 L932.5,156.2 L932.5,150 L946.7,160 L932.5,169.7 L932.5,163.5 L907.5,163.5 L907.5,169.7 Z" fill="#fff"/><circle cx="1017.5" cy="151.2" r="24.6" fill="none" stroke="#3e7bfa" stroke-width="7"/><path d="M1036,170 L1057.5,191.5" stroke="#3e7bfa" stroke-width="7.5" stroke-linecap="round"/><rect x="1097" y="125" width="70" height="3.3" fill="#b3c8fb"/><rect x="1097" y="137" width="70" height="4.2" fill="#b3c8fb"/><rect x="1097" y="149" width="70" height="5.8" fill="#b3c8fb"/><rect x="1097" y="161" width="70" height="7.2" fill="#b3c8fb"/><rect x="1097" y="173" width="70" height="8.2" fill="#b3c8fb"/><rect x="1097" y="185" width="70" height="10.0" fill="#b3c8fb"/><path d="M1203.7,155.5 L1232.8,129.7 L1232.8,144.2 C1256,144.2 1273,162 1276.7,190 C1266,174 1250,166 1232.8,166.3 L1232.8,181.7 Z" fill="#3e7bfa"/><path d="M1364.5,155.5 L1335.3,129.7 L1335.3,144.2 C1312,144.2 1295,162 1291.2,190 C1301,174 1317,166 1335.3,166.3 L1335.3,181.7 Z" fill="#b3c8fb"/><polygon points="1880.0,121.2 1887.8,125.6 1887.8,134.4 1880.0,138.8 1872.2,134.4 1872.2,125.6" fill="#92e64e"/><polygon points="2025.8,121.2 2033.5,125.6 2033.5,134.4 2025.8,138.8 2018.0,134.4 2018.0,125.6" fill="#f8da4a"/><polygon points="2212.0,121.2 2219.8,125.6 2219.8,134.4 2212.0,138.8 2204.2,134.4 2204.2,125.6" fill="#d92a1c"/><polyline points="2430.0,198.3 2441.0,208.3 2452.0,198.3" fill="none" stroke="#4a4a4a" stroke-width="3.3" stroke-linecap="round" stroke-linejoin="round"/><polyline points="2430.0,280.0 2441.0,290.0 2452.0,280.0" fill="none" stroke="#4a4a4a" stroke-width="3.3" stroke-linecap="round" stroke-linejoin="round"/><polyline points="2430.0,362.0 2441.0,372.0 2452.0,362.0" fill="none" stroke="#4a4a4a" stroke-width="3.3" stroke-linecap="round" stroke-linejoin="round"/><polyline points="2430.0,416.3 2441.0,426.3 2452.0,416.3" fill="none" stroke="#4a4a4a" stroke-width="3.3" stroke-linecap="round" stroke-linejoin="round"/><polyline points="1864.5,470.0 1875.5,480.0 1886.5,470.0" fill="none" stroke="#4a4a4a" stroke-width="3.3" stroke-linecap="round" stroke-linejoin="round"/><path d="M1719.18,204.66 L1722.19,206.58 L1720.56,210.52 L1717.08,209.75 L1715.85,210.98 L1716.62,214.46 L1712.68,216.09 L1710.76,213.08 L1709.04,213.08 L1707.12,216.09 L1703.18,214.46 L1703.95,210.98 L1702.72,209.75 L1699.24,210.52 L1697.61,206.58 L1700.62,204.66 L1700.62,202.94 L1697.61,201.02 L1699.24,197.08 L1702.72,197.85 L1703.95,196.62 L1703.18,193.14 L1707.12,191.51 L1709.04,194.52 L1710.76,194.52 L1712.68,191.51 L1716.62,193.14 L1715.85,196.62 L1717.08,197.85 L1720.56,197.08 L1722.19,201.02 L1719.18,202.94Z" fill="none" stroke="#4a7cf5" stroke-width="2.3" stroke-linejoin="round"/><circle cx="1709.9" cy="203.8" r="4.66" fill="none" stroke="#4a7cf5" stroke-width="2.07"/><path d="M2493.28,204.66 L2496.29,206.58 L2494.66,210.52 L2491.18,209.75 L2489.95,210.98 L2490.72,214.46 L2486.78,216.09 L2484.86,213.08 L2483.14,213.08 L2481.22,216.09 L2477.28,214.46 L2478.05,210.98 L2476.82,209.75 L2473.34,210.52 L2471.71,206.58 L2474.72,204.66 L2474.72,202.94 L2471.71,201.02 L2473.34,197.08 L2476.82,197.85 L2478.05,196.62 L2477.28,193.14 L2481.22,191.51 L2483.14,194.52 L2484.86,194.52 L2486.78,191.51 L2490.72,193.14 L2489.95,196.62 L2491.18,197.85 L2494.66,197.08 L2496.29,201.02 L2493.28,202.94Z" fill="none" stroke="#4a7cf5" stroke-width="2.3" stroke-linejoin="round"/><circle cx="2484" cy="203.8" r="4.66" fill="none" stroke="#4a7cf5" stroke-width="2.07"/><path d="M2493.28,286.66 L2496.29,288.58 L2494.66,292.52 L2491.18,291.75 L2489.95,292.98 L2490.72,296.46 L2486.78,298.09 L2484.86,295.08 L2483.14,295.08 L2481.22,298.09 L2477.28,296.46 L2478.05,292.98 L2476.82,291.75 L2473.34,292.52 L2471.71,288.58 L2474.72,286.66 L2474.72,284.94 L2471.71,283.02 L2473.34,279.08 L2476.82,279.85 L2478.05,278.62 L2477.28,275.14 L2481.22,273.51 L2483.14,276.52 L2484.86,276.52 L2486.78,273.51 L2490.72,275.14 L2489.95,278.62 L2491.18,279.85 L2494.66,279.08 L2496.29,283.02 L2493.28,284.94Z" fill="none" stroke="#4a7cf5" stroke-width="2.3" stroke-linejoin="round"/><circle cx="2484" cy="285.8" r="4.66" fill="none" stroke="#4a7cf5" stroke-width="2.07"/><path d="M2493.28,368.66 L2496.29,370.58 L2494.66,374.52 L2491.18,373.75 L2489.95,374.98 L2490.72,378.46 L2486.78,380.09 L2484.86,377.08 L2483.14,377.08 L2481.22,380.09 L2477.28,378.46 L2478.05,374.98 L2476.82,373.75 L2473.34,374.52 L2471.71,370.58 L2474.72,368.66 L2474.72,366.94 L2471.71,365.02 L2473.34,361.08 L2476.82,361.85 L2478.05,360.62 L2477.28,357.14 L2481.22,355.51 L2483.14,358.52 L2484.86,358.52 L2486.78,355.51 L2490.72,357.14 L2489.95,360.62 L2491.18,361.85 L2494.66,361.08 L2496.29,365.02 L2493.28,366.94Z" fill="none" stroke="#4a7cf5" stroke-width="2.3" stroke-linejoin="round"/><circle cx="2484" cy="367.8" r="4.66" fill="none" stroke="#4a7cf5" stroke-width="2.07"/><rect x="1697" y="355.5" width="26" height="26" fill="none" stroke="#4a7cf5" stroke-width="2.2"/><path d="M1697,361 L1723,361" stroke="#4a7cf5" stroke-width="2"/><rect x="1707.5" y="357" width="5" height="6" fill="#4a7cf5"/><path d="M1710,366 L1716,369.5 L1716,376 L1710,379 L1704,376 L1704,369.5 Z M1704,369.5 L1710,373 L1716,369.5 M1710,373 L1710,379" fill="none" stroke="#4a7cf5" stroke-width="1.6" stroke-linejoin="round"/><path d="M2159.6000000000004,587.7 C2164.8,578.7 2178.8,578.7 2184.0,587.7 C2178.8,596.7 2164.8,596.7 2159.6000000000004,587.7 Z" fill="none" stroke="#777" stroke-width="2.5" stroke-linejoin="round"/><circle cx="2171.8" cy="587.7" r="3.1" fill="none" stroke="#777" stroke-width="2.5"/><rect x="2343.2" y="581.4" width="19.5" height="19.4" rx="3.5" fill="#4a77f0"/><circle cx="2362.1" cy="581.9" r="9.6" fill="#fff"/><path d="M2367.11,582.37 L2368.73,583.40 L2367.85,585.53 L2365.97,585.11 L2365.31,585.77 L2365.73,587.65 L2363.60,588.53 L2362.57,586.91 L2361.63,586.91 L2360.60,588.53 L2358.47,587.65 L2358.89,585.77 L2358.23,585.11 L2356.35,585.53 L2355.47,583.40 L2357.09,582.37 L2357.09,581.43 L2355.47,580.40 L2356.35,578.27 L2358.23,578.69 L2358.89,578.03 L2358.47,576.15 L2360.60,575.27 L2361.63,576.89 L2362.57,576.89 L2363.60,575.27 L2365.73,576.15 L2365.31,578.03 L2365.97,578.69 L2367.85,578.27 L2368.73,580.40 L2367.11,581.43Z" fill="#4a77f0" stroke="#4a77f0" stroke-width="1.2" stroke-linejoin="round"/><circle cx="2362.1" cy="581.9" r="2.52" fill="none" stroke="#4a77f0" stroke-width="1.08"/><path d="M2159.6000000000004,621.8000000000001 C2164.8,612.8000000000001 2178.8,612.8000000000001 2184.0,621.8000000000001 C2178.8,630.8000000000001 2164.8,630.8000000000001 2159.6000000000004,621.8000000000001 Z" fill="none" stroke="#777" stroke-width="2.5" stroke-linejoin="round"/><circle cx="2171.8" cy="621.8000000000001" r="3.1" fill="none" stroke="#777" stroke-width="2.5"/><rect x="2343.2" y="615.5" width="19.5" height="19.4" rx="3.5" fill="#4a77f0"/><circle cx="2362.1" cy="616.0" r="9.6" fill="#fff"/><path d="M2367.11,616.47 L2368.73,617.50 L2367.85,619.63 L2365.97,619.21 L2365.31,619.87 L2365.73,621.75 L2363.60,622.63 L2362.57,621.01 L2361.63,621.01 L2360.60,622.63 L2358.47,621.75 L2358.89,619.87 L2358.23,619.21 L2356.35,619.63 L2355.47,617.50 L2357.09,616.47 L2357.09,615.53 L2355.47,614.50 L2356.35,612.37 L2358.23,612.79 L2358.89,612.13 L2358.47,610.25 L2360.60,609.37 L2361.63,610.99 L2362.57,610.99 L2363.60,609.37 L2365.73,610.25 L2365.31,612.13 L2365.97,612.79 L2367.85,612.37 L2368.73,614.50 L2367.11,615.53Z" fill="#4a77f0" stroke="#4a77f0" stroke-width="1.2" stroke-linejoin="round"/><circle cx="2362.1" cy="616.0" r="2.52" fill="none" stroke="#4a77f0" stroke-width="1.08"/><path d="M2159.6000000000004,655.9000000000001 C2164.8,646.9000000000001 2178.8,646.9000000000001 2184.0,655.9000000000001 C2178.8,664.9000000000001 2164.8,664.9000000000001 2159.6000000000004,655.9000000000001 Z" fill="none" stroke="#777" stroke-width="2.5" stroke-linejoin="round"/><circle cx="2171.8" cy="655.9000000000001" r="3.1" fill="none" stroke="#777" stroke-width="2.5"/><rect x="2343.2" y="649.6" width="19.5" height="19.4" rx="3.5" fill="#4a77f0"/><circle cx="2362.1" cy="650.1" r="9.6" fill="#fff"/><path d="M2367.11,650.57 L2368.73,651.60 L2367.85,653.73 L2365.97,653.31 L2365.31,653.97 L2365.73,655.85 L2363.60,656.73 L2362.57,655.11 L2361.63,655.11 L2360.60,656.73 L2358.47,655.85 L2358.89,653.97 L2358.23,653.31 L2356.35,653.73 L2355.47,651.60 L2357.09,650.57 L2357.09,649.63 L2355.47,648.60 L2356.35,646.47 L2358.23,646.89 L2358.89,646.23 L2358.47,644.35 L2360.60,643.47 L2361.63,645.09 L2362.57,645.09 L2363.60,643.47 L2365.73,644.35 L2365.31,646.23 L2365.97,646.89 L2367.85,646.47 L2368.73,648.60 L2367.11,649.63Z" fill="#4a77f0" stroke="#4a77f0" stroke-width="1.2" stroke-linejoin="round"/><circle cx="2362.1" cy="650.1" r="2.52" fill="none" stroke="#4a77f0" stroke-width="1.08"/><path d="M2159.6000000000004,690.0 C2164.8,681.0 2178.8,681.0 2184.0,690.0 C2178.8,699.0 2164.8,699.0 2159.6000000000004,690.0 Z" fill="none" stroke="#777" stroke-width="2.5" stroke-linejoin="round"/><circle cx="2171.8" cy="690.0" r="3.1" fill="none" stroke="#777" stroke-width="2.5"/><rect x="2343.2" y="683.7" width="19.5" height="19.4" rx="3.5" fill="#4a77f0"/><circle cx="2362.1" cy="684.2" r="9.6" fill="#fff"/><path d="M2367.11,684.67 L2368.73,685.70 L2367.85,687.83 L2365.97,687.41 L2365.31,688.07 L2365.73,689.95 L2363.60,690.83 L2362.57,689.21 L2361.63,689.21 L2360.60,690.83 L2358.47,689.95 L2358.89,688.07 L2358.23,687.41 L2356.35,687.83 L2355.47,685.70 L2357.09,684.67 L2357.09,683.73 L2355.47,682.70 L2356.35,680.57 L2358.23,680.99 L2358.89,680.33 L2358.47,678.45 L2360.60,677.57 L2361.63,679.19 L2362.57,679.19 L2363.60,677.57 L2365.73,678.45 L2365.31,680.33 L2365.97,680.99 L2367.85,680.57 L2368.73,682.70 L2367.11,683.73Z" fill="#4a77f0" stroke="#4a77f0" stroke-width="1.2" stroke-linejoin="round"/><circle cx="2362.1" cy="684.2" r="2.52" fill="none" stroke="#4a77f0" stroke-width="1.08"/></svg>
</body></html>
